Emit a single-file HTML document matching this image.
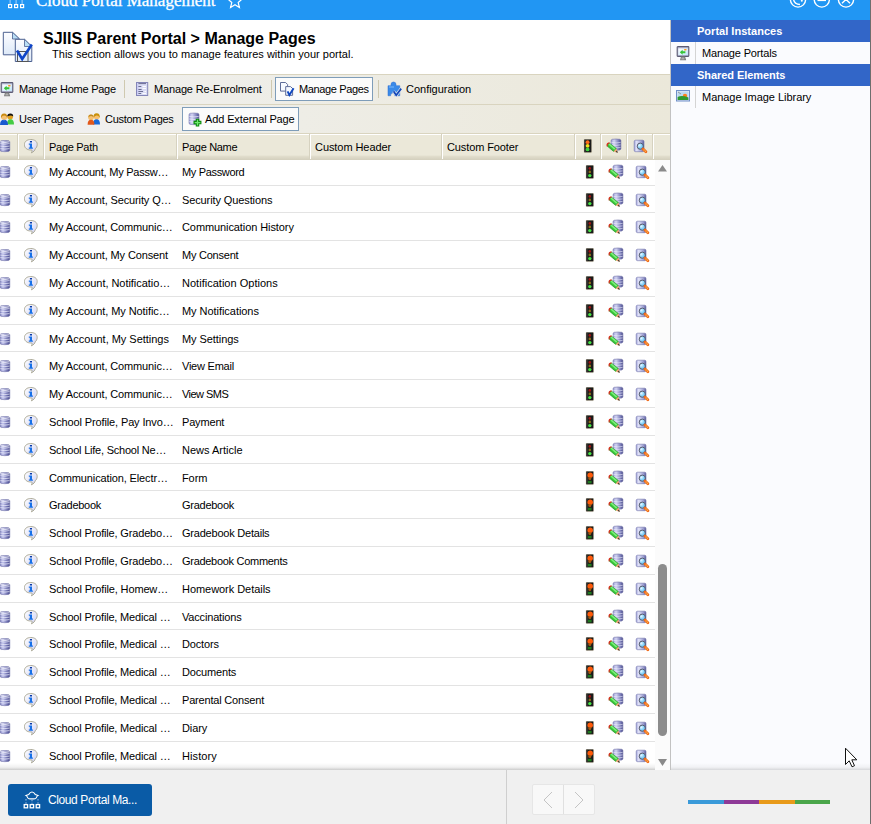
<!DOCTYPE html><html><head><meta charset="utf-8"><style>
*{margin:0;padding:0;box-sizing:border-box}
html,body{width:871px;height:824px;overflow:hidden;background:#fff;font-family:"Liberation Sans",sans-serif;color:#000}
.abs{position:absolute}
.t{position:absolute;white-space:nowrap;font-size:11px;line-height:13px;letter-spacing:-0.2px;color:#000}
svg{display:block}
</style></head><body>

<svg width="0" height="0" style="position:absolute"><defs>
<linearGradient id="dbg" x1="0" x2="1"><stop offset="0" stop-color="#8082bf"/><stop offset=".3" stop-color="#c4c6ee"/><stop offset=".7" stop-color="#7476b4"/><stop offset="1" stop-color="#45478a"/></linearGradient>
<linearGradient id="ifg" x1="0" y1="0" x2="1" y2="1"><stop offset="0" stop-color="#ffffff"/><stop offset="1" stop-color="#cfd0f2"/></linearGradient>
<linearGradient id="edg" x1="0" x2="1"><stop offset="0" stop-color="#9a9cd4"/><stop offset=".3" stop-color="#d4d5f3"/><stop offset=".75" stop-color="#7e80bc"/><stop offset="1" stop-color="#4a4c8a"/></linearGradient>
<linearGradient id="vwg" x1="0" x2="1"><stop offset="0" stop-color="#a4a6dc"/><stop offset=".25" stop-color="#e2e3f8"/><stop offset=".7" stop-color="#a2a4d6"/><stop offset="1" stop-color="#5a5c9c"/></linearGradient>
<radialGradient id="lng" cx=".35" cy=".35" r=".7"><stop offset="0" stop-color="#e8f8ff"/><stop offset=".5" stop-color="#8fd6fb"/><stop offset="1" stop-color="#5ab4e8"/></radialGradient>
<linearGradient id="scr" x1="0" y1="0" x2="1" y2="1"><stop offset="0" stop-color="#ffffff"/><stop offset="1" stop-color="#bfe6fa"/></linearGradient>
<linearGradient id="pg" x1="0" y1="0" x2="0" y2="1"><stop offset="0" stop-color="#fdfdff"/><stop offset="1" stop-color="#dde9f8"/></linearGradient>
</defs></svg>
<div class="abs" style="left:0px;top:0px;width:871px;height:20px;background:#2196f3"></div>
<svg class="abs" style="left:6px;top:0" width="20" height="10" viewBox="0 0 20 10"><g fill="none" stroke="#fff" stroke-width="1.2"><rect x="2.6" y="4.6" width="3" height="3"/><rect x="8.6" y="4.6" width="3" height="3"/><rect x="14.6" y="4.6" width="3" height="3"/></g><g stroke="#a9d4fa" stroke-width="1"><path d="M4.1 0 V4 M10.1 0 V4 M16.1 0 V4"/></g></svg>
<div class="t" style="left:36px;top:-8px;font-family:'Liberation Serif',serif;font-size:17px;line-height:17px;color:#fff;letter-spacing:0;-webkit-text-stroke:0.3px #fff">Cloud Portal Management</div>
<svg class="abs" style="left:226px;top:0" width="18" height="10" viewBox="0 0 18 10"><path d="M9 -6 L11 -1.2 L16 -0.8 L12.2 2.5 L13.4 7.5 L9 4.8 L4.6 7.5 L5.8 2.5 L2 -0.8 L7 -1.2Z" fill="none" stroke="#fff" stroke-width="1.2"/></svg>
<svg class="abs" style="left:780px;top:0" width="80" height="12" viewBox="0 0 80 12"><g fill="none" stroke="#fff" stroke-width="1.4"><circle cx="18" cy="-0.5" r="7.6"/><circle cx="41.8" cy="-0.5" r="7.6"/><circle cx="66" cy="-0.5" r="7.6"/><path d="M13.5 -1 Q14 4 20 4.5" /><path d="M37.5 0.4 H46"/><path d="M62 3.2 L66 -0.6 L70 3.2"/></g><circle cx="21.8" cy="0.8" r="1" fill="#fff"/></svg>
<div class="abs" style="left:870px;top:0px;width:1px;height:824px;background:#6e6e6e"></div>
<svg class="abs" style="left:2px;top:31px" width="33" height="32" viewBox="0 0 33 32"><path d="M1.3 1.3 H10.5 L17.5 8 V23.8 H1.3Z" fill="url(#pg)" stroke="#4a5f8f" stroke-width="1"/><path d="M10.5 1.3 V8 H17.5Z" fill="#b9def5" stroke="#4a5f8f" stroke-width=".8"/><path d="M13.3 8.3 H22.5 L29.8 15.5 V30.5 H13.3Z" fill="url(#pg)" stroke="#4a5f8f" stroke-width="1"/><path d="M22.5 8.3 V15.5 H29.8Z" fill="#b9def5" stroke="#4a5f8f" stroke-width=".8"/><rect x="15.5" y="20.5" width="10.5" height="10" fill="none" stroke="#555" stroke-width="1"/><path d="M15 19.5 L20.2 28 L29.8 13.5" fill="none" stroke="#0f45c8" stroke-width="2.6"/></svg>
<div class="t" style="left:43px;top:29px;font-size:16px;line-height:20px;font-weight:bold;color:#000;letter-spacing:0">SJIIS Parent Portal &gt; Manage Pages</div>
<div class="t" style="left:52px;top:48px;letter-spacing:0.021px;color:#000">This section allows you to manage features within your portal.</div>
<div class="abs" style="left:670px;top:20px;width:1px;height:750px;background:#c2c2c2"></div>
<div class="abs" style="left:671px;top:20px;width:199px;height:750px;background:#fafbfe"></div>
<div class="abs" style="left:671px;top:20px;width:199px;height:22px;background:#3266c8"></div>
<div class="abs" style="left:671px;top:64px;width:199px;height:22px;background:#3266c8"></div>
<div class="t" style="left:697px;top:25px;letter-spacing:0.02px;color:#fff;font-weight:bold">Portal Instances</div>
<div class="t" style="left:697px;top:69px;letter-spacing:-0.057px;color:#fff;font-weight:bold">Shared Elements</div>
<div class="abs" style="left:695px;top:42px;width:1px;height:22px;background:#d4d4d4"></div>
<div class="abs" style="left:695px;top:86px;width:1px;height:22px;background:#d4d4d4"></div>
<div class="t" style="left:702px;top:47px;letter-spacing:-0.162px;color:#000">Manage Portals</div>
<div class="t" style="left:702px;top:91px;letter-spacing:-0.037px;color:#000">Manage Image Library</div>
<div class="abs" style="left:676px;top:46px"><svg width="14" height="15" viewBox="0 0 14 15"><rect x="1.2" y="0.6" width="11.6" height="9.8" rx=".6" fill="#b8bdd8" stroke="#5c5c74" stroke-width="1.1"/><rect x="2.3" y="2.4" width="9.6" height="6.6" fill="url(#scr)"/><path d="M3.8 6.3 L6.6 3.8 V5.2 H9.4 V7.3 H6.6 V8.8Z" fill="#36c436"/><rect x="8" y="3" width="2.6" height="1.5" rx=".7" fill="#ff9a20"/><path d="M5 10.6 L4 14.2 H10.2 L9 10.6Z" fill="#7a7a7a"/><path d="M5.6 11.6 L5.2 13.4 H8.6 L8.2 11.6Z" fill="#b0b0b0"/></svg></div>
<div class="abs" style="left:676px;top:90px"><svg width="14" height="12" viewBox="0 0 14 12"><rect x="0.5" y="0.5" width="13" height="10.5" fill="#dfe8f6" stroke="#6f8fc8" stroke-width="1"/><rect x="1.6" y="1.6" width="10.8" height="8.3" fill="#bcd8f0"/><circle cx="9" cy="6" r="2.2" fill="#ff7f1a"/><path d="M1.6 7 Q6 5 12.4 7.5 V9.9 H1.6Z" fill="#2f9a2f"/><path d="M2 2 L5 4" stroke="#888" stroke-width=".8"/></svg></div>
<div class="abs" style="left:0px;top:74px;width:670px;height:60px;background:linear-gradient(90deg,#f1f1f2 0%,#eeede6 45%,#ebe8da 100%)"></div>
<div class="abs" style="left:0px;top:74px;width:670px;height:1px;background:#d9d4bf"></div>
<div class="abs" style="left:0px;top:104px;width:670px;height:1px;background:#d9d4bf"></div>
<div class="abs" style="left:0px;top:133px;width:670px;height:1px;background:#d9d4bf"></div>
<div class="abs" style="left:0px;top:82px"><svg width="14" height="15" viewBox="0 0 14 15"><rect x="1.2" y="0.6" width="11.6" height="9.8" rx=".6" fill="#b8bdd8" stroke="#5c5c74" stroke-width="1.1"/><rect x="2.3" y="2.4" width="9.6" height="6.6" fill="url(#scr)"/><path d="M3.8 6.3 L6.6 3.8 V5.2 H9.4 V7.3 H6.6 V8.8Z" fill="#36c436"/><rect x="8" y="3" width="2.6" height="1.5" rx=".7" fill="#ff9a20"/><path d="M5 10.6 L4 14.2 H10.2 L9 10.6Z" fill="#7a7a7a"/><path d="M5.6 11.6 L5.2 13.4 H8.6 L8.2 11.6Z" fill="#b0b0b0"/></svg></div>
<div class="t" style="left:19px;top:83px;letter-spacing:-0.253px;">Manage Home Page</div>
<div class="abs" style="left:124px;top:80px;width:1px;height:18px;background:#cfc9b0"></div>
<div class="abs" style="left:136px;top:82px"><svg width="14" height="16" viewBox="0 0 14 16"><rect x="0.5" y="0.5" width="11.2" height="13" fill="#d9dbf4" stroke="#8486b8" stroke-width="1"/><rect x="1.2" y="1.2" width="1.2" height="11.6" fill="#c8caf6"/><path d="M2.4 1.6 H10 M2.4 4.5 H5.3 M2.4 7.5 H5.6 M2.4 9.5 H7 M2.4 11.5 H5.2" stroke="#5f6188" stroke-width=".9"/><path d="M6.5 4.5 H10 M6.5 6.5 H10 M8.5 9.5 H10 M6.5 11.5 H10" stroke="#fff" stroke-width=".9"/></svg></div>
<div class="t" style="left:154px;top:83px;letter-spacing:-0.156px;">Manage Re-Enrolment</div>
<div class="abs" style="left:271px;top:80px;width:1px;height:18px;background:#cfc9b0"></div>
<div class="abs" style="left:275px;top:77px;width:98px;height:24px;background:#fbfbfb;border:1px solid #7f9db9"></div>
<div class="abs" style="left:278px;top:80px"><svg width="18" height="18" viewBox="0 0 18 18"><path d="M2.5 2.5 H7.6 L9.6 4.5 V11.1 H2.5Z" fill="#f6f9ff" stroke="#5e6c98" stroke-width="1"/><path d="M7.7 6.6 H12.6 L14.6 8.6 V15.3 H7.7Z" fill="#f6f9ff" stroke="#5e6c98" stroke-width="1"/><path d="M9.6 11.3 L11.4 15.1 L15.6 8.3" fill="none" stroke="#1148c0" stroke-width="1.9"/></svg></div>
<div class="t" style="left:299px;top:83px;letter-spacing:-0.364px;color:#000">Manage Pages</div>
<div class="abs" style="left:378px;top:80px;width:1px;height:18px;background:#cfc9b0"></div>
<div class="abs" style="left:386px;top:80px"><svg width="18" height="18" viewBox="0 0 18 18"><path d="M5 4.5 Q5 2 7.5 2 Q10 2 10 4.5 V5.7 H13.75 V15.75 H8.6 Q8.6 13 6.6 13 Q4.6 13 4.6 15.75 H2 V5.7 H5Z" fill="#3a8ae8" stroke="#2a6ad0" stroke-width=".5"/><path d="M3 7 H8" stroke="#8cc4ff" stroke-width="1" opacity=".8"/><path d="M7.6 11.2 L10.2 15.2 L15.2 8.6" fill="none" stroke="#f4f4ee" stroke-width="3"/><path d="M7.6 11.2 L10.2 15.2 L15.2 8.6" fill="none" stroke="#1246b8" stroke-width="1.8"/></svg></div>
<div class="t" style="left:406px;top:83px;letter-spacing:-0.017px;">Configuration</div>
<div class="abs" style="left:0px;top:113px"><svg width="15" height="13" viewBox="0 0 15 13"><circle cx="10.2" cy="3.8" r="2.8" fill="#e0a020"/><path d="M7.2 3.6 Q7.2 0.5 10.4 0.5 Q13.3 0.6 13.2 3.4 Q11 1.6 7.2 3.6Z" fill="#111"/><path d="M7 11.6 Q7 6.2 10.5 6.2 Q14 6.2 14 11.6Z" fill="#44cc44"/><circle cx="4.2" cy="4" r="3" fill="#f6c070"/><path d="M1 5.8 Q0.4 0.6 4.2 0.6 Q7.6 0.6 7.3 5.8 Q6.6 2.6 4.2 2.6 Q1.8 2.6 1 5.8Z" fill="#c88a10"/><path d="M0 12 Q0 6.8 4 6.8 Q8 6.8 8 12Z" fill="#1a5ad0"/><path d="M3.6 6.8 L4 8 L4.4 6.8Z" fill="#9ee0ff"/></svg></div>
<div class="t" style="left:19px;top:113px;letter-spacing:-0.289px;">User Pages</div>
<div class="abs" style="left:86px;top:113px"><svg width="15" height="13" viewBox="0 0 15 13"><circle cx="10.6" cy="3.8" r="2.8" fill="#f6c070"/><path d="M7.6 5 Q7 0.3 10.6 0.3 Q14.3 0.3 13.8 5.6 Q13 2.2 10.6 2.4 Q8.4 2.4 7.6 5Z" fill="#c8900a"/><path d="M7 11.6 Q7 6.2 10.5 6.2 Q14 6.2 14 11.6Z" fill="#1a6ad8"/><circle cx="5" cy="4.4" r="2.8" fill="#f6c070"/><path d="M2.4 4.6 Q2.2 1.4 5 1.4 Q7.8 1.4 7.6 4.6 Q6.6 2.8 5 2.9 Q3.2 2.9 2.4 4.6Z" fill="#c08a20"/><path d="M1.6 11.8 Q1.6 6.8 5 6.8 Q8.4 6.8 8.4 11.8Z" fill="#e2581a"/></svg></div>
<div class="t" style="left:105px;top:113px;letter-spacing:-0.309px;">Custom Pages</div>
<div class="abs" style="left:182px;top:107px;width:117px;height:24px;background:#fbfbfb;border:1px solid #7f9db9"></div>
<div class="abs" style="left:188px;top:112px"><svg width="18" height="18" viewBox="0 0 18 18"><path d="M1 2.2 Q1 1 6 1 Q11 1 11 2.2 V11.5 Q11 12.7 6 12.7 Q1 12.7 1 11.5Z" fill="url(#edg)" stroke="#7a7cae" stroke-width=".6"/><path d="M1.3 4.4 Q6 5.4 10.7 4.4 M1.3 7 Q6 8 10.7 7 M1.3 9.6 Q6 10.6 10.7 9.6" stroke="#eeeffc" stroke-width=".7" fill="none"/><path d="M8.3 7.2 H10.7 V9.4 H12.9 V11.8 H10.7 V14 H8.3 V11.8 H6.1 V9.4 H8.3Z" fill="#6ee86e" stroke="#0a8a0a" stroke-width="1.1"/></svg></div>
<div class="t" style="left:205px;top:113px;letter-spacing:-0.125px;color:#000">Add External Page</div>
<div class="abs" style="left:0px;top:134px;width:670px;height:1px;background:#fff"></div>
<div class="abs" style="left:0px;top:135px;width:670px;height:25px;background:linear-gradient(180deg,#ebe8d9 0%,#ebe8d9 80%,#e0dccb 86%,#d3cfbd 100%)"></div>
<div class="abs" style="left:17px;top:134px;width:1px;height:25px;background:#d6d2c0"></div>
<div class="abs" style="left:18px;top:134px;width:1px;height:25px;background:#fff"></div>
<div class="abs" style="left:43px;top:134px;width:1px;height:25px;background:#d6d2c0"></div>
<div class="abs" style="left:44px;top:134px;width:1px;height:25px;background:#fff"></div>
<div class="abs" style="left:176px;top:134px;width:1px;height:25px;background:#d6d2c0"></div>
<div class="abs" style="left:177px;top:134px;width:1px;height:25px;background:#fff"></div>
<div class="abs" style="left:309px;top:134px;width:1px;height:25px;background:#d6d2c0"></div>
<div class="abs" style="left:310px;top:134px;width:1px;height:25px;background:#fff"></div>
<div class="abs" style="left:441px;top:134px;width:1px;height:25px;background:#d6d2c0"></div>
<div class="abs" style="left:442px;top:134px;width:1px;height:25px;background:#fff"></div>
<div class="abs" style="left:574px;top:134px;width:1px;height:25px;background:#d6d2c0"></div>
<div class="abs" style="left:575px;top:134px;width:1px;height:25px;background:#fff"></div>
<div class="abs" style="left:600px;top:134px;width:1px;height:25px;background:#d6d2c0"></div>
<div class="abs" style="left:601px;top:134px;width:1px;height:25px;background:#fff"></div>
<div class="abs" style="left:626px;top:134px;width:1px;height:25px;background:#d6d2c0"></div>
<div class="abs" style="left:627px;top:134px;width:1px;height:25px;background:#fff"></div>
<div class="abs" style="left:652px;top:134px;width:1px;height:25px;background:#d6d2c0"></div>
<div class="abs" style="left:653px;top:134px;width:1px;height:25px;background:#fff"></div>
<div class="t" style="left:49px;top:141px;letter-spacing:-0.288px;">Page Path</div>
<div class="t" style="left:182px;top:141px;letter-spacing:-0.312px;">Page Name</div>
<div class="t" style="left:315px;top:141px;letter-spacing:-0.067px;">Custom Header</div>
<div class="t" style="left:447px;top:141px;letter-spacing:-0.117px;">Custom Footer</div>
<div class="abs" style="left:0px;top:140px"><svg width="11" height="13" viewBox="0 0 11 13"><path d="M0 1.6 Q0 0.4 4.9 0.4 Q9.8 0.4 9.8 1.6 V10.4 Q9.8 11.7 4.9 11.7 Q0 11.7 0 10.4Z" fill="url(#dbg)" stroke="#7a7cae" stroke-width=".6"/><path d="M0.3 3.6 Q4.9 4.6 9.5 3.6 M0.3 6.1 Q4.9 7.1 9.5 6.1 M0.3 8.6 Q4.9 9.6 9.5 8.6" stroke="#eeeffc" stroke-width=".8" fill="none" opacity=".9"/><path d="M0.3 1.8 Q4.9 2.8 9.5 1.8" stroke="#fff" stroke-width=".9" fill="none"/></svg></div>
<div class="abs" style="left:24px;top:139px"><svg width="15" height="15" viewBox="0 0 15 15"><path d="M6.8 0.5 C10.6 0.5 13.2 2.4 13.2 5.4 C13.2 7.4 12.4 8.7 11.2 9.8 C10.9 11.4 9.6 12.9 7.4 13.8 C8.1 12.6 8.2 11.8 7.9 11 C7.5 11 7.2 11 6.8 11 C3 11 0.4 8.9 0.4 5.7 C0.4 2.6 3 0.5 6.8 0.5Z" fill="url(#ifg)" stroke="#a6a48f" stroke-width=".9"/><rect x="5.9" y="2" width="2.1" height="1.5" fill="#0a3aa8"/><path d="M4.8 4.6 H8 V8.6 H8.9 V9.7 H4.8 V8.6 H5.8 V5.7 H4.8Z" fill="#1670e8"/></svg></div>
<div class="abs" style="left:583px;top:139px"><svg width="10" height="15" viewBox="0 0 10 15"><rect x="1" y="0.2" width="7.6" height="13.4" rx=".8" fill="#1a1a1a" stroke="#cfc39e" stroke-width=".4"/><rect x="1.4" y="0.6" width="1.2" height="12.6" fill="#555" opacity=".6"/><circle cx="4.6" cy="3.2" r="1.9" fill="#ff6a1a"/><circle cx="4.6" cy="6.8" r="1.9" fill="#f4e21a"/><circle cx="4.6" cy="10.4" r="1.9" fill="#40d040"/></svg></div>
<div class="abs" style="left:602px;top:136px"><svg width="24" height="20" viewBox="0 0 24 20"><path d="M9.1 4.2 Q9.1 3 14 3 Q18.9 3 18.9 4.2 V13.1 Q18.9 14.3 14 14.3 Q9.1 14.3 9.1 13.1Z" fill="url(#edg)" stroke="#6f71a6" stroke-width=".6"/><path d="M9.4 6.4 Q14 7.4 18.6 6.4 M9.4 8.9 Q14 9.9 18.6 8.9 M9.4 11.4 Q14 12.4 18.6 11.4" stroke="#eceefc" stroke-width=".7" fill="none" opacity=".85"/><path d="M5.3 10.2 Q4.6 7.3 7.3 7 L14.4 12.5 L11.7 15.5Z" fill="#36c436" stroke="#1f8a1f" stroke-width=".5"/><path d="M6.4 8.6 L7.6 7.6 L13.4 12.6 L12.2 13.8Z" fill="#86f486" opacity=".85"/><path d="M5.3 10.4 Q4.4 7.2 7.5 6.8" fill="none" stroke="#e0281a" stroke-width="1.2"/><path d="M11.7 15.5 L14.4 12.5 L15.9 16.7Z" fill="#f2a870"/><path d="M13.5 16 L15 14.4 L15.9 16.7Z" fill="#303030"/></svg></div>
<div class="abs" style="left:630px;top:136px"><svg width="20" height="20" viewBox="0 0 20 20"><rect x="4.2" y="4.2" width="9.8" height="11.5" rx="1.4" fill="url(#vwg)" stroke="#7072aa" stroke-width=".6"/><circle cx="10.3" cy="10.2" r="3.1" fill="url(#lng)" stroke="#5a5a6a" stroke-width="1"/><path d="M13 12.9 L15.9 15.8" stroke="#f06a1a" stroke-width="2.8" stroke-linecap="round"/><path d="M13.7 13.6 L14.4 14.3 M15.1 15 L15.6 15.5" stroke="#ffe06a" stroke-width="1.1"/></svg></div>
<div class="abs" style="left:0;top:160px;width:655px;height:609px;background:#fff;overflow:hidden">
<div class="abs" style="left:0px;top:25px;width:655px;height:1px;background:#e3e3e3"></div>
<div class="abs" style="left:0px;top:6px"><svg width="11" height="13" viewBox="0 0 11 13"><path d="M0 1.6 Q0 0.4 4.9 0.4 Q9.8 0.4 9.8 1.6 V10.4 Q9.8 11.7 4.9 11.7 Q0 11.7 0 10.4Z" fill="url(#dbg)" stroke="#7a7cae" stroke-width=".6"/><path d="M0.3 3.6 Q4.9 4.6 9.5 3.6 M0.3 6.1 Q4.9 7.1 9.5 6.1 M0.3 8.6 Q4.9 9.6 9.5 8.6" stroke="#eeeffc" stroke-width=".8" fill="none" opacity=".9"/><path d="M0.3 1.8 Q4.9 2.8 9.5 1.8" stroke="#fff" stroke-width=".9" fill="none"/></svg></div>
<div class="abs" style="left:24px;top:5px"><svg width="15" height="15" viewBox="0 0 15 15"><path d="M6.8 0.5 C10.6 0.5 13.2 2.4 13.2 5.4 C13.2 7.4 12.4 8.7 11.2 9.8 C10.9 11.4 9.6 12.9 7.4 13.8 C8.1 12.6 8.2 11.8 7.9 11 C7.5 11 7.2 11 6.8 11 C3 11 0.4 8.9 0.4 5.7 C0.4 2.6 3 0.5 6.8 0.5Z" fill="url(#ifg)" stroke="#a6a48f" stroke-width=".9"/><rect x="5.9" y="2" width="2.1" height="1.5" fill="#0a3aa8"/><path d="M4.8 4.6 H8 V8.6 H8.9 V9.7 H4.8 V8.6 H5.8 V5.7 H4.8Z" fill="#1670e8"/></svg></div>
<div class="t" style="left:49px;top:6px;letter-spacing:-0.23px;">My Account, My Passw…</div>
<div class="t" style="left:182px;top:6px;letter-spacing:-0.34px;">My Password</div>
<div class="abs" style="left:585px;top:5px"><svg width="10" height="15" viewBox="0 0 10 15"><rect x="1" y="0.2" width="7.6" height="13.4" rx=".8" fill="#1a1a1a" stroke="#cfc39e" stroke-width=".4"/><rect x="1.4" y="0.6" width="1.2" height="12.6" fill="#555" opacity=".6"/><circle cx="4.8" cy="3.4" r="1.3" fill="#a01414"/><circle cx="4.8" cy="6.9" r="1.3" fill="#8a6a18"/><circle cx="4.8" cy="10.6" r="1.7" fill="#44e044"/></svg></div>
<div class="abs" style="left:604px;top:2px"><svg width="24" height="20" viewBox="0 0 24 20"><path d="M9.1 4.2 Q9.1 3 14 3 Q18.9 3 18.9 4.2 V13.1 Q18.9 14.3 14 14.3 Q9.1 14.3 9.1 13.1Z" fill="url(#edg)" stroke="#6f71a6" stroke-width=".6"/><path d="M9.4 6.4 Q14 7.4 18.6 6.4 M9.4 8.9 Q14 9.9 18.6 8.9 M9.4 11.4 Q14 12.4 18.6 11.4" stroke="#eceefc" stroke-width=".7" fill="none" opacity=".85"/><path d="M5.3 10.2 Q4.6 7.3 7.3 7 L14.4 12.5 L11.7 15.5Z" fill="#36c436" stroke="#1f8a1f" stroke-width=".5"/><path d="M6.4 8.6 L7.6 7.6 L13.4 12.6 L12.2 13.8Z" fill="#86f486" opacity=".85"/><path d="M5.3 10.4 Q4.4 7.2 7.5 6.8" fill="none" stroke="#e0281a" stroke-width="1.2"/><path d="M11.7 15.5 L14.4 12.5 L15.9 16.7Z" fill="#f2a870"/><path d="M13.5 16 L15 14.4 L15.9 16.7Z" fill="#303030"/></svg></div>
<div class="abs" style="left:632px;top:2px"><svg width="20" height="20" viewBox="0 0 20 20"><rect x="4.2" y="4.2" width="9.8" height="11.5" rx="1.4" fill="url(#vwg)" stroke="#7072aa" stroke-width=".6"/><circle cx="10.3" cy="10.2" r="3.1" fill="url(#lng)" stroke="#5a5a6a" stroke-width="1"/><path d="M13 12.9 L15.9 15.8" stroke="#f06a1a" stroke-width="2.8" stroke-linecap="round"/><path d="M13.7 13.6 L14.4 14.3 M15.1 15 L15.6 15.5" stroke="#ffe06a" stroke-width="1.1"/></svg></div>
<div class="abs" style="left:0px;top:52px;width:655px;height:1px;background:#e3e3e3"></div>
<div class="abs" style="left:0px;top:34px"><svg width="11" height="13" viewBox="0 0 11 13"><path d="M0 1.6 Q0 0.4 4.9 0.4 Q9.8 0.4 9.8 1.6 V10.4 Q9.8 11.7 4.9 11.7 Q0 11.7 0 10.4Z" fill="url(#dbg)" stroke="#7a7cae" stroke-width=".6"/><path d="M0.3 3.6 Q4.9 4.6 9.5 3.6 M0.3 6.1 Q4.9 7.1 9.5 6.1 M0.3 8.6 Q4.9 9.6 9.5 8.6" stroke="#eeeffc" stroke-width=".8" fill="none" opacity=".9"/><path d="M0.3 1.8 Q4.9 2.8 9.5 1.8" stroke="#fff" stroke-width=".9" fill="none"/></svg></div>
<div class="abs" style="left:24px;top:33px"><svg width="15" height="15" viewBox="0 0 15 15"><path d="M6.8 0.5 C10.6 0.5 13.2 2.4 13.2 5.4 C13.2 7.4 12.4 8.7 11.2 9.8 C10.9 11.4 9.6 12.9 7.4 13.8 C8.1 12.6 8.2 11.8 7.9 11 C7.5 11 7.2 11 6.8 11 C3 11 0.4 8.9 0.4 5.7 C0.4 2.6 3 0.5 6.8 0.5Z" fill="url(#ifg)" stroke="#a6a48f" stroke-width=".9"/><rect x="5.9" y="2" width="2.1" height="1.5" fill="#0a3aa8"/><path d="M4.8 4.6 H8 V8.6 H8.9 V9.7 H4.8 V8.6 H5.8 V5.7 H4.8Z" fill="#1670e8"/></svg></div>
<div class="t" style="left:49px;top:34px;letter-spacing:-0.123px;">My Account, Security Q…</div>
<div class="t" style="left:182px;top:34px;letter-spacing:-0.112px;">Security Questions</div>
<div class="abs" style="left:585px;top:33px"><svg width="10" height="15" viewBox="0 0 10 15"><rect x="1" y="0.2" width="7.6" height="13.4" rx=".8" fill="#1a1a1a" stroke="#cfc39e" stroke-width=".4"/><rect x="1.4" y="0.6" width="1.2" height="12.6" fill="#555" opacity=".6"/><circle cx="4.8" cy="3.4" r="1.3" fill="#a01414"/><circle cx="4.8" cy="6.9" r="1.3" fill="#8a6a18"/><circle cx="4.8" cy="10.6" r="1.7" fill="#44e044"/></svg></div>
<div class="abs" style="left:604px;top:30px"><svg width="24" height="20" viewBox="0 0 24 20"><path d="M9.1 4.2 Q9.1 3 14 3 Q18.9 3 18.9 4.2 V13.1 Q18.9 14.3 14 14.3 Q9.1 14.3 9.1 13.1Z" fill="url(#edg)" stroke="#6f71a6" stroke-width=".6"/><path d="M9.4 6.4 Q14 7.4 18.6 6.4 M9.4 8.9 Q14 9.9 18.6 8.9 M9.4 11.4 Q14 12.4 18.6 11.4" stroke="#eceefc" stroke-width=".7" fill="none" opacity=".85"/><path d="M5.3 10.2 Q4.6 7.3 7.3 7 L14.4 12.5 L11.7 15.5Z" fill="#36c436" stroke="#1f8a1f" stroke-width=".5"/><path d="M6.4 8.6 L7.6 7.6 L13.4 12.6 L12.2 13.8Z" fill="#86f486" opacity=".85"/><path d="M5.3 10.4 Q4.4 7.2 7.5 6.8" fill="none" stroke="#e0281a" stroke-width="1.2"/><path d="M11.7 15.5 L14.4 12.5 L15.9 16.7Z" fill="#f2a870"/><path d="M13.5 16 L15 14.4 L15.9 16.7Z" fill="#303030"/></svg></div>
<div class="abs" style="left:632px;top:30px"><svg width="20" height="20" viewBox="0 0 20 20"><rect x="4.2" y="4.2" width="9.8" height="11.5" rx="1.4" fill="url(#vwg)" stroke="#7072aa" stroke-width=".6"/><circle cx="10.3" cy="10.2" r="3.1" fill="url(#lng)" stroke="#5a5a6a" stroke-width="1"/><path d="M13 12.9 L15.9 15.8" stroke="#f06a1a" stroke-width="2.8" stroke-linecap="round"/><path d="M13.7 13.6 L14.4 14.3 M15.1 15 L15.6 15.5" stroke="#ffe06a" stroke-width="1.1"/></svg></div>
<div class="abs" style="left:0px;top:80px;width:655px;height:1px;background:#e3e3e3"></div>
<div class="abs" style="left:0px;top:61px"><svg width="11" height="13" viewBox="0 0 11 13"><path d="M0 1.6 Q0 0.4 4.9 0.4 Q9.8 0.4 9.8 1.6 V10.4 Q9.8 11.7 4.9 11.7 Q0 11.7 0 10.4Z" fill="url(#dbg)" stroke="#7a7cae" stroke-width=".6"/><path d="M0.3 3.6 Q4.9 4.6 9.5 3.6 M0.3 6.1 Q4.9 7.1 9.5 6.1 M0.3 8.6 Q4.9 9.6 9.5 8.6" stroke="#eeeffc" stroke-width=".8" fill="none" opacity=".9"/><path d="M0.3 1.8 Q4.9 2.8 9.5 1.8" stroke="#fff" stroke-width=".9" fill="none"/></svg></div>
<div class="abs" style="left:24px;top:60px"><svg width="15" height="15" viewBox="0 0 15 15"><path d="M6.8 0.5 C10.6 0.5 13.2 2.4 13.2 5.4 C13.2 7.4 12.4 8.7 11.2 9.8 C10.9 11.4 9.6 12.9 7.4 13.8 C8.1 12.6 8.2 11.8 7.9 11 C7.5 11 7.2 11 6.8 11 C3 11 0.4 8.9 0.4 5.7 C0.4 2.6 3 0.5 6.8 0.5Z" fill="url(#ifg)" stroke="#a6a48f" stroke-width=".9"/><rect x="5.9" y="2" width="2.1" height="1.5" fill="#0a3aa8"/><path d="M4.8 4.6 H8 V8.6 H8.9 V9.7 H4.8 V8.6 H5.8 V5.7 H4.8Z" fill="#1670e8"/></svg></div>
<div class="t" style="left:49px;top:61px;letter-spacing:-0.14px;">My Account, Communic…</div>
<div class="t" style="left:182px;top:61px;letter-spacing:-0.09px;">Communication History</div>
<div class="abs" style="left:585px;top:60px"><svg width="10" height="15" viewBox="0 0 10 15"><rect x="1" y="0.2" width="7.6" height="13.4" rx=".8" fill="#1a1a1a" stroke="#cfc39e" stroke-width=".4"/><rect x="1.4" y="0.6" width="1.2" height="12.6" fill="#555" opacity=".6"/><circle cx="4.8" cy="3.4" r="1.3" fill="#a01414"/><circle cx="4.8" cy="6.9" r="1.3" fill="#8a6a18"/><circle cx="4.8" cy="10.6" r="1.7" fill="#44e044"/></svg></div>
<div class="abs" style="left:604px;top:57px"><svg width="24" height="20" viewBox="0 0 24 20"><path d="M9.1 4.2 Q9.1 3 14 3 Q18.9 3 18.9 4.2 V13.1 Q18.9 14.3 14 14.3 Q9.1 14.3 9.1 13.1Z" fill="url(#edg)" stroke="#6f71a6" stroke-width=".6"/><path d="M9.4 6.4 Q14 7.4 18.6 6.4 M9.4 8.9 Q14 9.9 18.6 8.9 M9.4 11.4 Q14 12.4 18.6 11.4" stroke="#eceefc" stroke-width=".7" fill="none" opacity=".85"/><path d="M5.3 10.2 Q4.6 7.3 7.3 7 L14.4 12.5 L11.7 15.5Z" fill="#36c436" stroke="#1f8a1f" stroke-width=".5"/><path d="M6.4 8.6 L7.6 7.6 L13.4 12.6 L12.2 13.8Z" fill="#86f486" opacity=".85"/><path d="M5.3 10.4 Q4.4 7.2 7.5 6.8" fill="none" stroke="#e0281a" stroke-width="1.2"/><path d="M11.7 15.5 L14.4 12.5 L15.9 16.7Z" fill="#f2a870"/><path d="M13.5 16 L15 14.4 L15.9 16.7Z" fill="#303030"/></svg></div>
<div class="abs" style="left:632px;top:57px"><svg width="20" height="20" viewBox="0 0 20 20"><rect x="4.2" y="4.2" width="9.8" height="11.5" rx="1.4" fill="url(#vwg)" stroke="#7072aa" stroke-width=".6"/><circle cx="10.3" cy="10.2" r="3.1" fill="url(#lng)" stroke="#5a5a6a" stroke-width="1"/><path d="M13 12.9 L15.9 15.8" stroke="#f06a1a" stroke-width="2.8" stroke-linecap="round"/><path d="M13.7 13.6 L14.4 14.3 M15.1 15 L15.6 15.5" stroke="#ffe06a" stroke-width="1.1"/></svg></div>
<div class="abs" style="left:0px;top:108px;width:655px;height:1px;background:#e3e3e3"></div>
<div class="abs" style="left:0px;top:89px"><svg width="11" height="13" viewBox="0 0 11 13"><path d="M0 1.6 Q0 0.4 4.9 0.4 Q9.8 0.4 9.8 1.6 V10.4 Q9.8 11.7 4.9 11.7 Q0 11.7 0 10.4Z" fill="url(#dbg)" stroke="#7a7cae" stroke-width=".6"/><path d="M0.3 3.6 Q4.9 4.6 9.5 3.6 M0.3 6.1 Q4.9 7.1 9.5 6.1 M0.3 8.6 Q4.9 9.6 9.5 8.6" stroke="#eeeffc" stroke-width=".8" fill="none" opacity=".9"/><path d="M0.3 1.8 Q4.9 2.8 9.5 1.8" stroke="#fff" stroke-width=".9" fill="none"/></svg></div>
<div class="abs" style="left:24px;top:88px"><svg width="15" height="15" viewBox="0 0 15 15"><path d="M6.8 0.5 C10.6 0.5 13.2 2.4 13.2 5.4 C13.2 7.4 12.4 8.7 11.2 9.8 C10.9 11.4 9.6 12.9 7.4 13.8 C8.1 12.6 8.2 11.8 7.9 11 C7.5 11 7.2 11 6.8 11 C3 11 0.4 8.9 0.4 5.7 C0.4 2.6 3 0.5 6.8 0.5Z" fill="url(#ifg)" stroke="#a6a48f" stroke-width=".9"/><rect x="5.9" y="2" width="2.1" height="1.5" fill="#0a3aa8"/><path d="M4.8 4.6 H8 V8.6 H8.9 V9.7 H4.8 V8.6 H5.8 V5.7 H4.8Z" fill="#1670e8"/></svg></div>
<div class="t" style="left:49px;top:89px;letter-spacing:-0.119px;">My Account, My Consent</div>
<div class="t" style="left:182px;top:89px;letter-spacing:-0.233px;">My Consent</div>
<div class="abs" style="left:585px;top:88px"><svg width="10" height="15" viewBox="0 0 10 15"><rect x="1" y="0.2" width="7.6" height="13.4" rx=".8" fill="#1a1a1a" stroke="#cfc39e" stroke-width=".4"/><rect x="1.4" y="0.6" width="1.2" height="12.6" fill="#555" opacity=".6"/><circle cx="4.8" cy="3.4" r="1.3" fill="#a01414"/><circle cx="4.8" cy="6.9" r="1.3" fill="#8a6a18"/><circle cx="4.8" cy="10.6" r="1.7" fill="#44e044"/></svg></div>
<div class="abs" style="left:604px;top:85px"><svg width="24" height="20" viewBox="0 0 24 20"><path d="M9.1 4.2 Q9.1 3 14 3 Q18.9 3 18.9 4.2 V13.1 Q18.9 14.3 14 14.3 Q9.1 14.3 9.1 13.1Z" fill="url(#edg)" stroke="#6f71a6" stroke-width=".6"/><path d="M9.4 6.4 Q14 7.4 18.6 6.4 M9.4 8.9 Q14 9.9 18.6 8.9 M9.4 11.4 Q14 12.4 18.6 11.4" stroke="#eceefc" stroke-width=".7" fill="none" opacity=".85"/><path d="M5.3 10.2 Q4.6 7.3 7.3 7 L14.4 12.5 L11.7 15.5Z" fill="#36c436" stroke="#1f8a1f" stroke-width=".5"/><path d="M6.4 8.6 L7.6 7.6 L13.4 12.6 L12.2 13.8Z" fill="#86f486" opacity=".85"/><path d="M5.3 10.4 Q4.4 7.2 7.5 6.8" fill="none" stroke="#e0281a" stroke-width="1.2"/><path d="M11.7 15.5 L14.4 12.5 L15.9 16.7Z" fill="#f2a870"/><path d="M13.5 16 L15 14.4 L15.9 16.7Z" fill="#303030"/></svg></div>
<div class="abs" style="left:632px;top:85px"><svg width="20" height="20" viewBox="0 0 20 20"><rect x="4.2" y="4.2" width="9.8" height="11.5" rx="1.4" fill="url(#vwg)" stroke="#7072aa" stroke-width=".6"/><circle cx="10.3" cy="10.2" r="3.1" fill="url(#lng)" stroke="#5a5a6a" stroke-width="1"/><path d="M13 12.9 L15.9 15.8" stroke="#f06a1a" stroke-width="2.8" stroke-linecap="round"/><path d="M13.7 13.6 L14.4 14.3 M15.1 15 L15.6 15.5" stroke="#ffe06a" stroke-width="1.1"/></svg></div>
<div class="abs" style="left:0px;top:136px;width:655px;height:1px;background:#e3e3e3"></div>
<div class="abs" style="left:0px;top:117px"><svg width="11" height="13" viewBox="0 0 11 13"><path d="M0 1.6 Q0 0.4 4.9 0.4 Q9.8 0.4 9.8 1.6 V10.4 Q9.8 11.7 4.9 11.7 Q0 11.7 0 10.4Z" fill="url(#dbg)" stroke="#7a7cae" stroke-width=".6"/><path d="M0.3 3.6 Q4.9 4.6 9.5 3.6 M0.3 6.1 Q4.9 7.1 9.5 6.1 M0.3 8.6 Q4.9 9.6 9.5 8.6" stroke="#eeeffc" stroke-width=".8" fill="none" opacity=".9"/><path d="M0.3 1.8 Q4.9 2.8 9.5 1.8" stroke="#fff" stroke-width=".9" fill="none"/></svg></div>
<div class="abs" style="left:24px;top:116px"><svg width="15" height="15" viewBox="0 0 15 15"><path d="M6.8 0.5 C10.6 0.5 13.2 2.4 13.2 5.4 C13.2 7.4 12.4 8.7 11.2 9.8 C10.9 11.4 9.6 12.9 7.4 13.8 C8.1 12.6 8.2 11.8 7.9 11 C7.5 11 7.2 11 6.8 11 C3 11 0.4 8.9 0.4 5.7 C0.4 2.6 3 0.5 6.8 0.5Z" fill="url(#ifg)" stroke="#a6a48f" stroke-width=".9"/><rect x="5.9" y="2" width="2.1" height="1.5" fill="#0a3aa8"/><path d="M4.8 4.6 H8 V8.6 H8.9 V9.7 H4.8 V8.6 H5.8 V5.7 H4.8Z" fill="#1670e8"/></svg></div>
<div class="t" style="left:49px;top:117px;letter-spacing:-0.043px;">My Account, Notificatio…</div>
<div class="t" style="left:182px;top:117px;letter-spacing:0.016px;">Notification Options</div>
<div class="abs" style="left:585px;top:116px"><svg width="10" height="15" viewBox="0 0 10 15"><rect x="1" y="0.2" width="7.6" height="13.4" rx=".8" fill="#1a1a1a" stroke="#cfc39e" stroke-width=".4"/><rect x="1.4" y="0.6" width="1.2" height="12.6" fill="#555" opacity=".6"/><circle cx="4.8" cy="3.4" r="1.3" fill="#a01414"/><circle cx="4.8" cy="6.9" r="1.3" fill="#8a6a18"/><circle cx="4.8" cy="10.6" r="1.7" fill="#44e044"/></svg></div>
<div class="abs" style="left:604px;top:113px"><svg width="24" height="20" viewBox="0 0 24 20"><path d="M9.1 4.2 Q9.1 3 14 3 Q18.9 3 18.9 4.2 V13.1 Q18.9 14.3 14 14.3 Q9.1 14.3 9.1 13.1Z" fill="url(#edg)" stroke="#6f71a6" stroke-width=".6"/><path d="M9.4 6.4 Q14 7.4 18.6 6.4 M9.4 8.9 Q14 9.9 18.6 8.9 M9.4 11.4 Q14 12.4 18.6 11.4" stroke="#eceefc" stroke-width=".7" fill="none" opacity=".85"/><path d="M5.3 10.2 Q4.6 7.3 7.3 7 L14.4 12.5 L11.7 15.5Z" fill="#36c436" stroke="#1f8a1f" stroke-width=".5"/><path d="M6.4 8.6 L7.6 7.6 L13.4 12.6 L12.2 13.8Z" fill="#86f486" opacity=".85"/><path d="M5.3 10.4 Q4.4 7.2 7.5 6.8" fill="none" stroke="#e0281a" stroke-width="1.2"/><path d="M11.7 15.5 L14.4 12.5 L15.9 16.7Z" fill="#f2a870"/><path d="M13.5 16 L15 14.4 L15.9 16.7Z" fill="#303030"/></svg></div>
<div class="abs" style="left:632px;top:113px"><svg width="20" height="20" viewBox="0 0 20 20"><rect x="4.2" y="4.2" width="9.8" height="11.5" rx="1.4" fill="url(#vwg)" stroke="#7072aa" stroke-width=".6"/><circle cx="10.3" cy="10.2" r="3.1" fill="url(#lng)" stroke="#5a5a6a" stroke-width="1"/><path d="M13 12.9 L15.9 15.8" stroke="#f06a1a" stroke-width="2.8" stroke-linecap="round"/><path d="M13.7 13.6 L14.4 14.3 M15.1 15 L15.6 15.5" stroke="#ffe06a" stroke-width="1.1"/></svg></div>
<div class="abs" style="left:0px;top:164px;width:655px;height:1px;background:#e3e3e3"></div>
<div class="abs" style="left:0px;top:145px"><svg width="11" height="13" viewBox="0 0 11 13"><path d="M0 1.6 Q0 0.4 4.9 0.4 Q9.8 0.4 9.8 1.6 V10.4 Q9.8 11.7 4.9 11.7 Q0 11.7 0 10.4Z" fill="url(#dbg)" stroke="#7a7cae" stroke-width=".6"/><path d="M0.3 3.6 Q4.9 4.6 9.5 3.6 M0.3 6.1 Q4.9 7.1 9.5 6.1 M0.3 8.6 Q4.9 9.6 9.5 8.6" stroke="#eeeffc" stroke-width=".8" fill="none" opacity=".9"/><path d="M0.3 1.8 Q4.9 2.8 9.5 1.8" stroke="#fff" stroke-width=".9" fill="none"/></svg></div>
<div class="abs" style="left:24px;top:144px"><svg width="15" height="15" viewBox="0 0 15 15"><path d="M6.8 0.5 C10.6 0.5 13.2 2.4 13.2 5.4 C13.2 7.4 12.4 8.7 11.2 9.8 C10.9 11.4 9.6 12.9 7.4 13.8 C8.1 12.6 8.2 11.8 7.9 11 C7.5 11 7.2 11 6.8 11 C3 11 0.4 8.9 0.4 5.7 C0.4 2.6 3 0.5 6.8 0.5Z" fill="url(#ifg)" stroke="#a6a48f" stroke-width=".9"/><rect x="5.9" y="2" width="2.1" height="1.5" fill="#0a3aa8"/><path d="M4.8 4.6 H8 V8.6 H8.9 V9.7 H4.8 V8.6 H5.8 V5.7 H4.8Z" fill="#1670e8"/></svg></div>
<div class="t" style="left:49px;top:145px;letter-spacing:-0.068px;">My Account, My Notific…</div>
<div class="t" style="left:182px;top:145px;letter-spacing:-0.047px;">My Notifications</div>
<div class="abs" style="left:585px;top:144px"><svg width="10" height="15" viewBox="0 0 10 15"><rect x="1" y="0.2" width="7.6" height="13.4" rx=".8" fill="#1a1a1a" stroke="#cfc39e" stroke-width=".4"/><rect x="1.4" y="0.6" width="1.2" height="12.6" fill="#555" opacity=".6"/><circle cx="4.8" cy="3.4" r="1.3" fill="#a01414"/><circle cx="4.8" cy="6.9" r="1.3" fill="#8a6a18"/><circle cx="4.8" cy="10.6" r="1.7" fill="#44e044"/></svg></div>
<div class="abs" style="left:604px;top:141px"><svg width="24" height="20" viewBox="0 0 24 20"><path d="M9.1 4.2 Q9.1 3 14 3 Q18.9 3 18.9 4.2 V13.1 Q18.9 14.3 14 14.3 Q9.1 14.3 9.1 13.1Z" fill="url(#edg)" stroke="#6f71a6" stroke-width=".6"/><path d="M9.4 6.4 Q14 7.4 18.6 6.4 M9.4 8.9 Q14 9.9 18.6 8.9 M9.4 11.4 Q14 12.4 18.6 11.4" stroke="#eceefc" stroke-width=".7" fill="none" opacity=".85"/><path d="M5.3 10.2 Q4.6 7.3 7.3 7 L14.4 12.5 L11.7 15.5Z" fill="#36c436" stroke="#1f8a1f" stroke-width=".5"/><path d="M6.4 8.6 L7.6 7.6 L13.4 12.6 L12.2 13.8Z" fill="#86f486" opacity=".85"/><path d="M5.3 10.4 Q4.4 7.2 7.5 6.8" fill="none" stroke="#e0281a" stroke-width="1.2"/><path d="M11.7 15.5 L14.4 12.5 L15.9 16.7Z" fill="#f2a870"/><path d="M13.5 16 L15 14.4 L15.9 16.7Z" fill="#303030"/></svg></div>
<div class="abs" style="left:632px;top:141px"><svg width="20" height="20" viewBox="0 0 20 20"><rect x="4.2" y="4.2" width="9.8" height="11.5" rx="1.4" fill="url(#vwg)" stroke="#7072aa" stroke-width=".6"/><circle cx="10.3" cy="10.2" r="3.1" fill="url(#lng)" stroke="#5a5a6a" stroke-width="1"/><path d="M13 12.9 L15.9 15.8" stroke="#f06a1a" stroke-width="2.8" stroke-linecap="round"/><path d="M13.7 13.6 L14.4 14.3 M15.1 15 L15.6 15.5" stroke="#ffe06a" stroke-width="1.1"/></svg></div>
<div class="abs" style="left:0px;top:191px;width:655px;height:1px;background:#e3e3e3"></div>
<div class="abs" style="left:0px;top:173px"><svg width="11" height="13" viewBox="0 0 11 13"><path d="M0 1.6 Q0 0.4 4.9 0.4 Q9.8 0.4 9.8 1.6 V10.4 Q9.8 11.7 4.9 11.7 Q0 11.7 0 10.4Z" fill="url(#dbg)" stroke="#7a7cae" stroke-width=".6"/><path d="M0.3 3.6 Q4.9 4.6 9.5 3.6 M0.3 6.1 Q4.9 7.1 9.5 6.1 M0.3 8.6 Q4.9 9.6 9.5 8.6" stroke="#eeeffc" stroke-width=".8" fill="none" opacity=".9"/><path d="M0.3 1.8 Q4.9 2.8 9.5 1.8" stroke="#fff" stroke-width=".9" fill="none"/></svg></div>
<div class="abs" style="left:24px;top:172px"><svg width="15" height="15" viewBox="0 0 15 15"><path d="M6.8 0.5 C10.6 0.5 13.2 2.4 13.2 5.4 C13.2 7.4 12.4 8.7 11.2 9.8 C10.9 11.4 9.6 12.9 7.4 13.8 C8.1 12.6 8.2 11.8 7.9 11 C7.5 11 7.2 11 6.8 11 C3 11 0.4 8.9 0.4 5.7 C0.4 2.6 3 0.5 6.8 0.5Z" fill="url(#ifg)" stroke="#a6a48f" stroke-width=".9"/><rect x="5.9" y="2" width="2.1" height="1.5" fill="#0a3aa8"/><path d="M4.8 4.6 H8 V8.6 H8.9 V9.7 H4.8 V8.6 H5.8 V5.7 H4.8Z" fill="#1670e8"/></svg></div>
<div class="t" style="left:49px;top:173px;letter-spacing:-0.023px;">My Account, My Settings</div>
<div class="t" style="left:182px;top:173px;letter-spacing:-0.07px;">My Settings</div>
<div class="abs" style="left:585px;top:172px"><svg width="10" height="15" viewBox="0 0 10 15"><rect x="1" y="0.2" width="7.6" height="13.4" rx=".8" fill="#1a1a1a" stroke="#cfc39e" stroke-width=".4"/><rect x="1.4" y="0.6" width="1.2" height="12.6" fill="#555" opacity=".6"/><circle cx="4.8" cy="3.4" r="1.3" fill="#a01414"/><circle cx="4.8" cy="6.9" r="1.3" fill="#8a6a18"/><circle cx="4.8" cy="10.6" r="1.7" fill="#44e044"/></svg></div>
<div class="abs" style="left:604px;top:169px"><svg width="24" height="20" viewBox="0 0 24 20"><path d="M9.1 4.2 Q9.1 3 14 3 Q18.9 3 18.9 4.2 V13.1 Q18.9 14.3 14 14.3 Q9.1 14.3 9.1 13.1Z" fill="url(#edg)" stroke="#6f71a6" stroke-width=".6"/><path d="M9.4 6.4 Q14 7.4 18.6 6.4 M9.4 8.9 Q14 9.9 18.6 8.9 M9.4 11.4 Q14 12.4 18.6 11.4" stroke="#eceefc" stroke-width=".7" fill="none" opacity=".85"/><path d="M5.3 10.2 Q4.6 7.3 7.3 7 L14.4 12.5 L11.7 15.5Z" fill="#36c436" stroke="#1f8a1f" stroke-width=".5"/><path d="M6.4 8.6 L7.6 7.6 L13.4 12.6 L12.2 13.8Z" fill="#86f486" opacity=".85"/><path d="M5.3 10.4 Q4.4 7.2 7.5 6.8" fill="none" stroke="#e0281a" stroke-width="1.2"/><path d="M11.7 15.5 L14.4 12.5 L15.9 16.7Z" fill="#f2a870"/><path d="M13.5 16 L15 14.4 L15.9 16.7Z" fill="#303030"/></svg></div>
<div class="abs" style="left:632px;top:169px"><svg width="20" height="20" viewBox="0 0 20 20"><rect x="4.2" y="4.2" width="9.8" height="11.5" rx="1.4" fill="url(#vwg)" stroke="#7072aa" stroke-width=".6"/><circle cx="10.3" cy="10.2" r="3.1" fill="url(#lng)" stroke="#5a5a6a" stroke-width="1"/><path d="M13 12.9 L15.9 15.8" stroke="#f06a1a" stroke-width="2.8" stroke-linecap="round"/><path d="M13.7 13.6 L14.4 14.3 M15.1 15 L15.6 15.5" stroke="#ffe06a" stroke-width="1.1"/></svg></div>
<div class="abs" style="left:0px;top:219px;width:655px;height:1px;background:#e3e3e3"></div>
<div class="abs" style="left:0px;top:200px"><svg width="11" height="13" viewBox="0 0 11 13"><path d="M0 1.6 Q0 0.4 4.9 0.4 Q9.8 0.4 9.8 1.6 V10.4 Q9.8 11.7 4.9 11.7 Q0 11.7 0 10.4Z" fill="url(#dbg)" stroke="#7a7cae" stroke-width=".6"/><path d="M0.3 3.6 Q4.9 4.6 9.5 3.6 M0.3 6.1 Q4.9 7.1 9.5 6.1 M0.3 8.6 Q4.9 9.6 9.5 8.6" stroke="#eeeffc" stroke-width=".8" fill="none" opacity=".9"/><path d="M0.3 1.8 Q4.9 2.8 9.5 1.8" stroke="#fff" stroke-width=".9" fill="none"/></svg></div>
<div class="abs" style="left:24px;top:199px"><svg width="15" height="15" viewBox="0 0 15 15"><path d="M6.8 0.5 C10.6 0.5 13.2 2.4 13.2 5.4 C13.2 7.4 12.4 8.7 11.2 9.8 C10.9 11.4 9.6 12.9 7.4 13.8 C8.1 12.6 8.2 11.8 7.9 11 C7.5 11 7.2 11 6.8 11 C3 11 0.4 8.9 0.4 5.7 C0.4 2.6 3 0.5 6.8 0.5Z" fill="url(#ifg)" stroke="#a6a48f" stroke-width=".9"/><rect x="5.9" y="2" width="2.1" height="1.5" fill="#0a3aa8"/><path d="M4.8 4.6 H8 V8.6 H8.9 V9.7 H4.8 V8.6 H5.8 V5.7 H4.8Z" fill="#1670e8"/></svg></div>
<div class="t" style="left:49px;top:200px;letter-spacing:-0.14px;">My Account, Communic…</div>
<div class="t" style="left:182px;top:200px;letter-spacing:-0.233px;">View Email</div>
<div class="abs" style="left:585px;top:199px"><svg width="10" height="15" viewBox="0 0 10 15"><rect x="1" y="0.2" width="7.6" height="13.4" rx=".8" fill="#1a1a1a" stroke="#cfc39e" stroke-width=".4"/><rect x="1.4" y="0.6" width="1.2" height="12.6" fill="#555" opacity=".6"/><circle cx="4.8" cy="3.4" r="1.3" fill="#a01414"/><circle cx="4.8" cy="6.9" r="1.3" fill="#8a6a18"/><circle cx="4.8" cy="10.6" r="1.7" fill="#44e044"/></svg></div>
<div class="abs" style="left:604px;top:196px"><svg width="24" height="20" viewBox="0 0 24 20"><path d="M9.1 4.2 Q9.1 3 14 3 Q18.9 3 18.9 4.2 V13.1 Q18.9 14.3 14 14.3 Q9.1 14.3 9.1 13.1Z" fill="url(#edg)" stroke="#6f71a6" stroke-width=".6"/><path d="M9.4 6.4 Q14 7.4 18.6 6.4 M9.4 8.9 Q14 9.9 18.6 8.9 M9.4 11.4 Q14 12.4 18.6 11.4" stroke="#eceefc" stroke-width=".7" fill="none" opacity=".85"/><path d="M5.3 10.2 Q4.6 7.3 7.3 7 L14.4 12.5 L11.7 15.5Z" fill="#36c436" stroke="#1f8a1f" stroke-width=".5"/><path d="M6.4 8.6 L7.6 7.6 L13.4 12.6 L12.2 13.8Z" fill="#86f486" opacity=".85"/><path d="M5.3 10.4 Q4.4 7.2 7.5 6.8" fill="none" stroke="#e0281a" stroke-width="1.2"/><path d="M11.7 15.5 L14.4 12.5 L15.9 16.7Z" fill="#f2a870"/><path d="M13.5 16 L15 14.4 L15.9 16.7Z" fill="#303030"/></svg></div>
<div class="abs" style="left:632px;top:196px"><svg width="20" height="20" viewBox="0 0 20 20"><rect x="4.2" y="4.2" width="9.8" height="11.5" rx="1.4" fill="url(#vwg)" stroke="#7072aa" stroke-width=".6"/><circle cx="10.3" cy="10.2" r="3.1" fill="url(#lng)" stroke="#5a5a6a" stroke-width="1"/><path d="M13 12.9 L15.9 15.8" stroke="#f06a1a" stroke-width="2.8" stroke-linecap="round"/><path d="M13.7 13.6 L14.4 14.3 M15.1 15 L15.6 15.5" stroke="#ffe06a" stroke-width="1.1"/></svg></div>
<div class="abs" style="left:0px;top:247px;width:655px;height:1px;background:#e3e3e3"></div>
<div class="abs" style="left:0px;top:228px"><svg width="11" height="13" viewBox="0 0 11 13"><path d="M0 1.6 Q0 0.4 4.9 0.4 Q9.8 0.4 9.8 1.6 V10.4 Q9.8 11.7 4.9 11.7 Q0 11.7 0 10.4Z" fill="url(#dbg)" stroke="#7a7cae" stroke-width=".6"/><path d="M0.3 3.6 Q4.9 4.6 9.5 3.6 M0.3 6.1 Q4.9 7.1 9.5 6.1 M0.3 8.6 Q4.9 9.6 9.5 8.6" stroke="#eeeffc" stroke-width=".8" fill="none" opacity=".9"/><path d="M0.3 1.8 Q4.9 2.8 9.5 1.8" stroke="#fff" stroke-width=".9" fill="none"/></svg></div>
<div class="abs" style="left:24px;top:227px"><svg width="15" height="15" viewBox="0 0 15 15"><path d="M6.8 0.5 C10.6 0.5 13.2 2.4 13.2 5.4 C13.2 7.4 12.4 8.7 11.2 9.8 C10.9 11.4 9.6 12.9 7.4 13.8 C8.1 12.6 8.2 11.8 7.9 11 C7.5 11 7.2 11 6.8 11 C3 11 0.4 8.9 0.4 5.7 C0.4 2.6 3 0.5 6.8 0.5Z" fill="url(#ifg)" stroke="#a6a48f" stroke-width=".9"/><rect x="5.9" y="2" width="2.1" height="1.5" fill="#0a3aa8"/><path d="M4.8 4.6 H8 V8.6 H8.9 V9.7 H4.8 V8.6 H5.8 V5.7 H4.8Z" fill="#1670e8"/></svg></div>
<div class="t" style="left:49px;top:228px;letter-spacing:-0.14px;">My Account, Communic…</div>
<div class="t" style="left:182px;top:228px;letter-spacing:-0.543px;">View SMS</div>
<div class="abs" style="left:585px;top:227px"><svg width="10" height="15" viewBox="0 0 10 15"><rect x="1" y="0.2" width="7.6" height="13.4" rx=".8" fill="#1a1a1a" stroke="#cfc39e" stroke-width=".4"/><rect x="1.4" y="0.6" width="1.2" height="12.6" fill="#555" opacity=".6"/><circle cx="4.8" cy="3.4" r="1.3" fill="#a01414"/><circle cx="4.8" cy="6.9" r="1.3" fill="#8a6a18"/><circle cx="4.8" cy="10.6" r="1.7" fill="#44e044"/></svg></div>
<div class="abs" style="left:604px;top:224px"><svg width="24" height="20" viewBox="0 0 24 20"><path d="M9.1 4.2 Q9.1 3 14 3 Q18.9 3 18.9 4.2 V13.1 Q18.9 14.3 14 14.3 Q9.1 14.3 9.1 13.1Z" fill="url(#edg)" stroke="#6f71a6" stroke-width=".6"/><path d="M9.4 6.4 Q14 7.4 18.6 6.4 M9.4 8.9 Q14 9.9 18.6 8.9 M9.4 11.4 Q14 12.4 18.6 11.4" stroke="#eceefc" stroke-width=".7" fill="none" opacity=".85"/><path d="M5.3 10.2 Q4.6 7.3 7.3 7 L14.4 12.5 L11.7 15.5Z" fill="#36c436" stroke="#1f8a1f" stroke-width=".5"/><path d="M6.4 8.6 L7.6 7.6 L13.4 12.6 L12.2 13.8Z" fill="#86f486" opacity=".85"/><path d="M5.3 10.4 Q4.4 7.2 7.5 6.8" fill="none" stroke="#e0281a" stroke-width="1.2"/><path d="M11.7 15.5 L14.4 12.5 L15.9 16.7Z" fill="#f2a870"/><path d="M13.5 16 L15 14.4 L15.9 16.7Z" fill="#303030"/></svg></div>
<div class="abs" style="left:632px;top:224px"><svg width="20" height="20" viewBox="0 0 20 20"><rect x="4.2" y="4.2" width="9.8" height="11.5" rx="1.4" fill="url(#vwg)" stroke="#7072aa" stroke-width=".6"/><circle cx="10.3" cy="10.2" r="3.1" fill="url(#lng)" stroke="#5a5a6a" stroke-width="1"/><path d="M13 12.9 L15.9 15.8" stroke="#f06a1a" stroke-width="2.8" stroke-linecap="round"/><path d="M13.7 13.6 L14.4 14.3 M15.1 15 L15.6 15.5" stroke="#ffe06a" stroke-width="1.1"/></svg></div>
<div class="abs" style="left:0px;top:275px;width:655px;height:1px;background:#e3e3e3"></div>
<div class="abs" style="left:0px;top:256px"><svg width="11" height="13" viewBox="0 0 11 13"><path d="M0 1.6 Q0 0.4 4.9 0.4 Q9.8 0.4 9.8 1.6 V10.4 Q9.8 11.7 4.9 11.7 Q0 11.7 0 10.4Z" fill="url(#dbg)" stroke="#7a7cae" stroke-width=".6"/><path d="M0.3 3.6 Q4.9 4.6 9.5 3.6 M0.3 6.1 Q4.9 7.1 9.5 6.1 M0.3 8.6 Q4.9 9.6 9.5 8.6" stroke="#eeeffc" stroke-width=".8" fill="none" opacity=".9"/><path d="M0.3 1.8 Q4.9 2.8 9.5 1.8" stroke="#fff" stroke-width=".9" fill="none"/></svg></div>
<div class="abs" style="left:24px;top:255px"><svg width="15" height="15" viewBox="0 0 15 15"><path d="M6.8 0.5 C10.6 0.5 13.2 2.4 13.2 5.4 C13.2 7.4 12.4 8.7 11.2 9.8 C10.9 11.4 9.6 12.9 7.4 13.8 C8.1 12.6 8.2 11.8 7.9 11 C7.5 11 7.2 11 6.8 11 C3 11 0.4 8.9 0.4 5.7 C0.4 2.6 3 0.5 6.8 0.5Z" fill="url(#ifg)" stroke="#a6a48f" stroke-width=".9"/><rect x="5.9" y="2" width="2.1" height="1.5" fill="#0a3aa8"/><path d="M4.8 4.6 H8 V8.6 H8.9 V9.7 H4.8 V8.6 H5.8 V5.7 H4.8Z" fill="#1670e8"/></svg></div>
<div class="t" style="left:49px;top:256px;letter-spacing:-0.129px;">School Profile, Pay Invo…</div>
<div class="t" style="left:182px;top:256px;letter-spacing:-0.167px;">Payment</div>
<div class="abs" style="left:585px;top:255px"><svg width="10" height="15" viewBox="0 0 10 15"><rect x="1" y="0.2" width="7.6" height="13.4" rx=".8" fill="#1a1a1a" stroke="#cfc39e" stroke-width=".4"/><rect x="1.4" y="0.6" width="1.2" height="12.6" fill="#555" opacity=".6"/><circle cx="4.8" cy="3.4" r="1.3" fill="#a01414"/><circle cx="4.8" cy="6.9" r="1.3" fill="#8a6a18"/><circle cx="4.8" cy="10.6" r="1.7" fill="#44e044"/></svg></div>
<div class="abs" style="left:604px;top:252px"><svg width="24" height="20" viewBox="0 0 24 20"><path d="M9.1 4.2 Q9.1 3 14 3 Q18.9 3 18.9 4.2 V13.1 Q18.9 14.3 14 14.3 Q9.1 14.3 9.1 13.1Z" fill="url(#edg)" stroke="#6f71a6" stroke-width=".6"/><path d="M9.4 6.4 Q14 7.4 18.6 6.4 M9.4 8.9 Q14 9.9 18.6 8.9 M9.4 11.4 Q14 12.4 18.6 11.4" stroke="#eceefc" stroke-width=".7" fill="none" opacity=".85"/><path d="M5.3 10.2 Q4.6 7.3 7.3 7 L14.4 12.5 L11.7 15.5Z" fill="#36c436" stroke="#1f8a1f" stroke-width=".5"/><path d="M6.4 8.6 L7.6 7.6 L13.4 12.6 L12.2 13.8Z" fill="#86f486" opacity=".85"/><path d="M5.3 10.4 Q4.4 7.2 7.5 6.8" fill="none" stroke="#e0281a" stroke-width="1.2"/><path d="M11.7 15.5 L14.4 12.5 L15.9 16.7Z" fill="#f2a870"/><path d="M13.5 16 L15 14.4 L15.9 16.7Z" fill="#303030"/></svg></div>
<div class="abs" style="left:632px;top:252px"><svg width="20" height="20" viewBox="0 0 20 20"><rect x="4.2" y="4.2" width="9.8" height="11.5" rx="1.4" fill="url(#vwg)" stroke="#7072aa" stroke-width=".6"/><circle cx="10.3" cy="10.2" r="3.1" fill="url(#lng)" stroke="#5a5a6a" stroke-width="1"/><path d="M13 12.9 L15.9 15.8" stroke="#f06a1a" stroke-width="2.8" stroke-linecap="round"/><path d="M13.7 13.6 L14.4 14.3 M15.1 15 L15.6 15.5" stroke="#ffe06a" stroke-width="1.1"/></svg></div>
<div class="abs" style="left:0px;top:303px;width:655px;height:1px;background:#e3e3e3"></div>
<div class="abs" style="left:0px;top:284px"><svg width="11" height="13" viewBox="0 0 11 13"><path d="M0 1.6 Q0 0.4 4.9 0.4 Q9.8 0.4 9.8 1.6 V10.4 Q9.8 11.7 4.9 11.7 Q0 11.7 0 10.4Z" fill="url(#dbg)" stroke="#7a7cae" stroke-width=".6"/><path d="M0.3 3.6 Q4.9 4.6 9.5 3.6 M0.3 6.1 Q4.9 7.1 9.5 6.1 M0.3 8.6 Q4.9 9.6 9.5 8.6" stroke="#eeeffc" stroke-width=".8" fill="none" opacity=".9"/><path d="M0.3 1.8 Q4.9 2.8 9.5 1.8" stroke="#fff" stroke-width=".9" fill="none"/></svg></div>
<div class="abs" style="left:24px;top:283px"><svg width="15" height="15" viewBox="0 0 15 15"><path d="M6.8 0.5 C10.6 0.5 13.2 2.4 13.2 5.4 C13.2 7.4 12.4 8.7 11.2 9.8 C10.9 11.4 9.6 12.9 7.4 13.8 C8.1 12.6 8.2 11.8 7.9 11 C7.5 11 7.2 11 6.8 11 C3 11 0.4 8.9 0.4 5.7 C0.4 2.6 3 0.5 6.8 0.5Z" fill="url(#ifg)" stroke="#a6a48f" stroke-width=".9"/><rect x="5.9" y="2" width="2.1" height="1.5" fill="#0a3aa8"/><path d="M4.8 4.6 H8 V8.6 H8.9 V9.7 H4.8 V8.6 H5.8 V5.7 H4.8Z" fill="#1670e8"/></svg></div>
<div class="t" style="left:49px;top:284px;letter-spacing:-0.223px;">School Life, School Ne…</div>
<div class="t" style="left:182px;top:284px;letter-spacing:0.009px;">News Article</div>
<div class="abs" style="left:585px;top:283px"><svg width="10" height="15" viewBox="0 0 10 15"><rect x="1" y="0.2" width="7.6" height="13.4" rx=".8" fill="#1a1a1a" stroke="#cfc39e" stroke-width=".4"/><rect x="1.4" y="0.6" width="1.2" height="12.6" fill="#555" opacity=".6"/><circle cx="4.8" cy="3.4" r="1.3" fill="#a01414"/><circle cx="4.8" cy="6.9" r="1.3" fill="#8a6a18"/><circle cx="4.8" cy="10.6" r="1.7" fill="#44e044"/></svg></div>
<div class="abs" style="left:604px;top:280px"><svg width="24" height="20" viewBox="0 0 24 20"><path d="M9.1 4.2 Q9.1 3 14 3 Q18.9 3 18.9 4.2 V13.1 Q18.9 14.3 14 14.3 Q9.1 14.3 9.1 13.1Z" fill="url(#edg)" stroke="#6f71a6" stroke-width=".6"/><path d="M9.4 6.4 Q14 7.4 18.6 6.4 M9.4 8.9 Q14 9.9 18.6 8.9 M9.4 11.4 Q14 12.4 18.6 11.4" stroke="#eceefc" stroke-width=".7" fill="none" opacity=".85"/><path d="M5.3 10.2 Q4.6 7.3 7.3 7 L14.4 12.5 L11.7 15.5Z" fill="#36c436" stroke="#1f8a1f" stroke-width=".5"/><path d="M6.4 8.6 L7.6 7.6 L13.4 12.6 L12.2 13.8Z" fill="#86f486" opacity=".85"/><path d="M5.3 10.4 Q4.4 7.2 7.5 6.8" fill="none" stroke="#e0281a" stroke-width="1.2"/><path d="M11.7 15.5 L14.4 12.5 L15.9 16.7Z" fill="#f2a870"/><path d="M13.5 16 L15 14.4 L15.9 16.7Z" fill="#303030"/></svg></div>
<div class="abs" style="left:632px;top:280px"><svg width="20" height="20" viewBox="0 0 20 20"><rect x="4.2" y="4.2" width="9.8" height="11.5" rx="1.4" fill="url(#vwg)" stroke="#7072aa" stroke-width=".6"/><circle cx="10.3" cy="10.2" r="3.1" fill="url(#lng)" stroke="#5a5a6a" stroke-width="1"/><path d="M13 12.9 L15.9 15.8" stroke="#f06a1a" stroke-width="2.8" stroke-linecap="round"/><path d="M13.7 13.6 L14.4 14.3 M15.1 15 L15.6 15.5" stroke="#ffe06a" stroke-width="1.1"/></svg></div>
<div class="abs" style="left:0px;top:330px;width:655px;height:1px;background:#e3e3e3"></div>
<div class="abs" style="left:0px;top:312px"><svg width="11" height="13" viewBox="0 0 11 13"><path d="M0 1.6 Q0 0.4 4.9 0.4 Q9.8 0.4 9.8 1.6 V10.4 Q9.8 11.7 4.9 11.7 Q0 11.7 0 10.4Z" fill="url(#dbg)" stroke="#7a7cae" stroke-width=".6"/><path d="M0.3 3.6 Q4.9 4.6 9.5 3.6 M0.3 6.1 Q4.9 7.1 9.5 6.1 M0.3 8.6 Q4.9 9.6 9.5 8.6" stroke="#eeeffc" stroke-width=".8" fill="none" opacity=".9"/><path d="M0.3 1.8 Q4.9 2.8 9.5 1.8" stroke="#fff" stroke-width=".9" fill="none"/></svg></div>
<div class="abs" style="left:24px;top:311px"><svg width="15" height="15" viewBox="0 0 15 15"><path d="M6.8 0.5 C10.6 0.5 13.2 2.4 13.2 5.4 C13.2 7.4 12.4 8.7 11.2 9.8 C10.9 11.4 9.6 12.9 7.4 13.8 C8.1 12.6 8.2 11.8 7.9 11 C7.5 11 7.2 11 6.8 11 C3 11 0.4 8.9 0.4 5.7 C0.4 2.6 3 0.5 6.8 0.5Z" fill="url(#ifg)" stroke="#a6a48f" stroke-width=".9"/><rect x="5.9" y="2" width="2.1" height="1.5" fill="#0a3aa8"/><path d="M4.8 4.6 H8 V8.6 H8.9 V9.7 H4.8 V8.6 H5.8 V5.7 H4.8Z" fill="#1670e8"/></svg></div>
<div class="t" style="left:49px;top:312px;letter-spacing:-0.129px;">Communication, Electr…</div>
<div class="t" style="left:182px;top:312px;letter-spacing:-0.1px;">Form</div>
<div class="abs" style="left:585px;top:311px"><svg width="10" height="15" viewBox="0 0 10 15"><rect x="1" y="0.2" width="7.6" height="13.4" rx=".8" fill="#1a1a1a" stroke="#cfc39e" stroke-width=".4"/><rect x="1.4" y="0.6" width="1.2" height="12.6" fill="#555" opacity=".6"/><circle cx="5.2" cy="4.3" r="2.7" fill="#ff5a0a"/><circle cx="4.8" cy="7.6" r="1.5" fill="#a05a12"/><rect x="2.8" y="9.8" width="3.8" height="2.6" fill="#1f7a1f"/></svg></div>
<div class="abs" style="left:604px;top:308px"><svg width="24" height="20" viewBox="0 0 24 20"><path d="M9.1 4.2 Q9.1 3 14 3 Q18.9 3 18.9 4.2 V13.1 Q18.9 14.3 14 14.3 Q9.1 14.3 9.1 13.1Z" fill="url(#edg)" stroke="#6f71a6" stroke-width=".6"/><path d="M9.4 6.4 Q14 7.4 18.6 6.4 M9.4 8.9 Q14 9.9 18.6 8.9 M9.4 11.4 Q14 12.4 18.6 11.4" stroke="#eceefc" stroke-width=".7" fill="none" opacity=".85"/><path d="M5.3 10.2 Q4.6 7.3 7.3 7 L14.4 12.5 L11.7 15.5Z" fill="#36c436" stroke="#1f8a1f" stroke-width=".5"/><path d="M6.4 8.6 L7.6 7.6 L13.4 12.6 L12.2 13.8Z" fill="#86f486" opacity=".85"/><path d="M5.3 10.4 Q4.4 7.2 7.5 6.8" fill="none" stroke="#e0281a" stroke-width="1.2"/><path d="M11.7 15.5 L14.4 12.5 L15.9 16.7Z" fill="#f2a870"/><path d="M13.5 16 L15 14.4 L15.9 16.7Z" fill="#303030"/></svg></div>
<div class="abs" style="left:632px;top:308px"><svg width="20" height="20" viewBox="0 0 20 20"><rect x="4.2" y="4.2" width="9.8" height="11.5" rx="1.4" fill="url(#vwg)" stroke="#7072aa" stroke-width=".6"/><circle cx="10.3" cy="10.2" r="3.1" fill="url(#lng)" stroke="#5a5a6a" stroke-width="1"/><path d="M13 12.9 L15.9 15.8" stroke="#f06a1a" stroke-width="2.8" stroke-linecap="round"/><path d="M13.7 13.6 L14.4 14.3 M15.1 15 L15.6 15.5" stroke="#ffe06a" stroke-width="1.1"/></svg></div>
<div class="abs" style="left:0px;top:358px;width:655px;height:1px;background:#e3e3e3"></div>
<div class="abs" style="left:0px;top:339px"><svg width="11" height="13" viewBox="0 0 11 13"><path d="M0 1.6 Q0 0.4 4.9 0.4 Q9.8 0.4 9.8 1.6 V10.4 Q9.8 11.7 4.9 11.7 Q0 11.7 0 10.4Z" fill="url(#dbg)" stroke="#7a7cae" stroke-width=".6"/><path d="M0.3 3.6 Q4.9 4.6 9.5 3.6 M0.3 6.1 Q4.9 7.1 9.5 6.1 M0.3 8.6 Q4.9 9.6 9.5 8.6" stroke="#eeeffc" stroke-width=".8" fill="none" opacity=".9"/><path d="M0.3 1.8 Q4.9 2.8 9.5 1.8" stroke="#fff" stroke-width=".9" fill="none"/></svg></div>
<div class="abs" style="left:24px;top:338px"><svg width="15" height="15" viewBox="0 0 15 15"><path d="M6.8 0.5 C10.6 0.5 13.2 2.4 13.2 5.4 C13.2 7.4 12.4 8.7 11.2 9.8 C10.9 11.4 9.6 12.9 7.4 13.8 C8.1 12.6 8.2 11.8 7.9 11 C7.5 11 7.2 11 6.8 11 C3 11 0.4 8.9 0.4 5.7 C0.4 2.6 3 0.5 6.8 0.5Z" fill="url(#ifg)" stroke="#a6a48f" stroke-width=".9"/><rect x="5.9" y="2" width="2.1" height="1.5" fill="#0a3aa8"/><path d="M4.8 4.6 H8 V8.6 H8.9 V9.7 H4.8 V8.6 H5.8 V5.7 H4.8Z" fill="#1670e8"/></svg></div>
<div class="t" style="left:49px;top:339px;letter-spacing:-0.263px;">Gradebook</div>
<div class="t" style="left:182px;top:339px;letter-spacing:-0.263px;">Gradebook</div>
<div class="abs" style="left:585px;top:338px"><svg width="10" height="15" viewBox="0 0 10 15"><rect x="1" y="0.2" width="7.6" height="13.4" rx=".8" fill="#1a1a1a" stroke="#cfc39e" stroke-width=".4"/><rect x="1.4" y="0.6" width="1.2" height="12.6" fill="#555" opacity=".6"/><circle cx="5.2" cy="4.3" r="2.7" fill="#ff5a0a"/><circle cx="4.8" cy="7.6" r="1.5" fill="#a05a12"/><rect x="2.8" y="9.8" width="3.8" height="2.6" fill="#1f7a1f"/></svg></div>
<div class="abs" style="left:604px;top:335px"><svg width="24" height="20" viewBox="0 0 24 20"><path d="M9.1 4.2 Q9.1 3 14 3 Q18.9 3 18.9 4.2 V13.1 Q18.9 14.3 14 14.3 Q9.1 14.3 9.1 13.1Z" fill="url(#edg)" stroke="#6f71a6" stroke-width=".6"/><path d="M9.4 6.4 Q14 7.4 18.6 6.4 M9.4 8.9 Q14 9.9 18.6 8.9 M9.4 11.4 Q14 12.4 18.6 11.4" stroke="#eceefc" stroke-width=".7" fill="none" opacity=".85"/><path d="M5.3 10.2 Q4.6 7.3 7.3 7 L14.4 12.5 L11.7 15.5Z" fill="#36c436" stroke="#1f8a1f" stroke-width=".5"/><path d="M6.4 8.6 L7.6 7.6 L13.4 12.6 L12.2 13.8Z" fill="#86f486" opacity=".85"/><path d="M5.3 10.4 Q4.4 7.2 7.5 6.8" fill="none" stroke="#e0281a" stroke-width="1.2"/><path d="M11.7 15.5 L14.4 12.5 L15.9 16.7Z" fill="#f2a870"/><path d="M13.5 16 L15 14.4 L15.9 16.7Z" fill="#303030"/></svg></div>
<div class="abs" style="left:632px;top:335px"><svg width="20" height="20" viewBox="0 0 20 20"><rect x="4.2" y="4.2" width="9.8" height="11.5" rx="1.4" fill="url(#vwg)" stroke="#7072aa" stroke-width=".6"/><circle cx="10.3" cy="10.2" r="3.1" fill="url(#lng)" stroke="#5a5a6a" stroke-width="1"/><path d="M13 12.9 L15.9 15.8" stroke="#f06a1a" stroke-width="2.8" stroke-linecap="round"/><path d="M13.7 13.6 L14.4 14.3 M15.1 15 L15.6 15.5" stroke="#ffe06a" stroke-width="1.1"/></svg></div>
<div class="abs" style="left:0px;top:386px;width:655px;height:1px;background:#e3e3e3"></div>
<div class="abs" style="left:0px;top:367px"><svg width="11" height="13" viewBox="0 0 11 13"><path d="M0 1.6 Q0 0.4 4.9 0.4 Q9.8 0.4 9.8 1.6 V10.4 Q9.8 11.7 4.9 11.7 Q0 11.7 0 10.4Z" fill="url(#dbg)" stroke="#7a7cae" stroke-width=".6"/><path d="M0.3 3.6 Q4.9 4.6 9.5 3.6 M0.3 6.1 Q4.9 7.1 9.5 6.1 M0.3 8.6 Q4.9 9.6 9.5 8.6" stroke="#eeeffc" stroke-width=".8" fill="none" opacity=".9"/><path d="M0.3 1.8 Q4.9 2.8 9.5 1.8" stroke="#fff" stroke-width=".9" fill="none"/></svg></div>
<div class="abs" style="left:24px;top:366px"><svg width="15" height="15" viewBox="0 0 15 15"><path d="M6.8 0.5 C10.6 0.5 13.2 2.4 13.2 5.4 C13.2 7.4 12.4 8.7 11.2 9.8 C10.9 11.4 9.6 12.9 7.4 13.8 C8.1 12.6 8.2 11.8 7.9 11 C7.5 11 7.2 11 6.8 11 C3 11 0.4 8.9 0.4 5.7 C0.4 2.6 3 0.5 6.8 0.5Z" fill="url(#ifg)" stroke="#a6a48f" stroke-width=".9"/><rect x="5.9" y="2" width="2.1" height="1.5" fill="#0a3aa8"/><path d="M4.8 4.6 H8 V8.6 H8.9 V9.7 H4.8 V8.6 H5.8 V5.7 H4.8Z" fill="#1670e8"/></svg></div>
<div class="t" style="left:49px;top:367px;letter-spacing:-0.165px;">School Profile, Gradebo…</div>
<div class="t" style="left:182px;top:367px;letter-spacing:-0.219px;">Gradebook Details</div>
<div class="abs" style="left:585px;top:366px"><svg width="10" height="15" viewBox="0 0 10 15"><rect x="1" y="0.2" width="7.6" height="13.4" rx=".8" fill="#1a1a1a" stroke="#cfc39e" stroke-width=".4"/><rect x="1.4" y="0.6" width="1.2" height="12.6" fill="#555" opacity=".6"/><circle cx="5.2" cy="4.3" r="2.7" fill="#ff5a0a"/><circle cx="4.8" cy="7.6" r="1.5" fill="#a05a12"/><rect x="2.8" y="9.8" width="3.8" height="2.6" fill="#1f7a1f"/></svg></div>
<div class="abs" style="left:604px;top:363px"><svg width="24" height="20" viewBox="0 0 24 20"><path d="M9.1 4.2 Q9.1 3 14 3 Q18.9 3 18.9 4.2 V13.1 Q18.9 14.3 14 14.3 Q9.1 14.3 9.1 13.1Z" fill="url(#edg)" stroke="#6f71a6" stroke-width=".6"/><path d="M9.4 6.4 Q14 7.4 18.6 6.4 M9.4 8.9 Q14 9.9 18.6 8.9 M9.4 11.4 Q14 12.4 18.6 11.4" stroke="#eceefc" stroke-width=".7" fill="none" opacity=".85"/><path d="M5.3 10.2 Q4.6 7.3 7.3 7 L14.4 12.5 L11.7 15.5Z" fill="#36c436" stroke="#1f8a1f" stroke-width=".5"/><path d="M6.4 8.6 L7.6 7.6 L13.4 12.6 L12.2 13.8Z" fill="#86f486" opacity=".85"/><path d="M5.3 10.4 Q4.4 7.2 7.5 6.8" fill="none" stroke="#e0281a" stroke-width="1.2"/><path d="M11.7 15.5 L14.4 12.5 L15.9 16.7Z" fill="#f2a870"/><path d="M13.5 16 L15 14.4 L15.9 16.7Z" fill="#303030"/></svg></div>
<div class="abs" style="left:632px;top:363px"><svg width="20" height="20" viewBox="0 0 20 20"><rect x="4.2" y="4.2" width="9.8" height="11.5" rx="1.4" fill="url(#vwg)" stroke="#7072aa" stroke-width=".6"/><circle cx="10.3" cy="10.2" r="3.1" fill="url(#lng)" stroke="#5a5a6a" stroke-width="1"/><path d="M13 12.9 L15.9 15.8" stroke="#f06a1a" stroke-width="2.8" stroke-linecap="round"/><path d="M13.7 13.6 L14.4 14.3 M15.1 15 L15.6 15.5" stroke="#ffe06a" stroke-width="1.1"/></svg></div>
<div class="abs" style="left:0px;top:414px;width:655px;height:1px;background:#e3e3e3"></div>
<div class="abs" style="left:0px;top:395px"><svg width="11" height="13" viewBox="0 0 11 13"><path d="M0 1.6 Q0 0.4 4.9 0.4 Q9.8 0.4 9.8 1.6 V10.4 Q9.8 11.7 4.9 11.7 Q0 11.7 0 10.4Z" fill="url(#dbg)" stroke="#7a7cae" stroke-width=".6"/><path d="M0.3 3.6 Q4.9 4.6 9.5 3.6 M0.3 6.1 Q4.9 7.1 9.5 6.1 M0.3 8.6 Q4.9 9.6 9.5 8.6" stroke="#eeeffc" stroke-width=".8" fill="none" opacity=".9"/><path d="M0.3 1.8 Q4.9 2.8 9.5 1.8" stroke="#fff" stroke-width=".9" fill="none"/></svg></div>
<div class="abs" style="left:24px;top:394px"><svg width="15" height="15" viewBox="0 0 15 15"><path d="M6.8 0.5 C10.6 0.5 13.2 2.4 13.2 5.4 C13.2 7.4 12.4 8.7 11.2 9.8 C10.9 11.4 9.6 12.9 7.4 13.8 C8.1 12.6 8.2 11.8 7.9 11 C7.5 11 7.2 11 6.8 11 C3 11 0.4 8.9 0.4 5.7 C0.4 2.6 3 0.5 6.8 0.5Z" fill="url(#ifg)" stroke="#a6a48f" stroke-width=".9"/><rect x="5.9" y="2" width="2.1" height="1.5" fill="#0a3aa8"/><path d="M4.8 4.6 H8 V8.6 H8.9 V9.7 H4.8 V8.6 H5.8 V5.7 H4.8Z" fill="#1670e8"/></svg></div>
<div class="t" style="left:49px;top:395px;letter-spacing:-0.165px;">School Profile, Gradebo…</div>
<div class="t" style="left:182px;top:395px;letter-spacing:-0.294px;">Gradebook Comments</div>
<div class="abs" style="left:585px;top:394px"><svg width="10" height="15" viewBox="0 0 10 15"><rect x="1" y="0.2" width="7.6" height="13.4" rx=".8" fill="#1a1a1a" stroke="#cfc39e" stroke-width=".4"/><rect x="1.4" y="0.6" width="1.2" height="12.6" fill="#555" opacity=".6"/><circle cx="5.2" cy="4.3" r="2.7" fill="#ff5a0a"/><circle cx="4.8" cy="7.6" r="1.5" fill="#a05a12"/><rect x="2.8" y="9.8" width="3.8" height="2.6" fill="#1f7a1f"/></svg></div>
<div class="abs" style="left:604px;top:391px"><svg width="24" height="20" viewBox="0 0 24 20"><path d="M9.1 4.2 Q9.1 3 14 3 Q18.9 3 18.9 4.2 V13.1 Q18.9 14.3 14 14.3 Q9.1 14.3 9.1 13.1Z" fill="url(#edg)" stroke="#6f71a6" stroke-width=".6"/><path d="M9.4 6.4 Q14 7.4 18.6 6.4 M9.4 8.9 Q14 9.9 18.6 8.9 M9.4 11.4 Q14 12.4 18.6 11.4" stroke="#eceefc" stroke-width=".7" fill="none" opacity=".85"/><path d="M5.3 10.2 Q4.6 7.3 7.3 7 L14.4 12.5 L11.7 15.5Z" fill="#36c436" stroke="#1f8a1f" stroke-width=".5"/><path d="M6.4 8.6 L7.6 7.6 L13.4 12.6 L12.2 13.8Z" fill="#86f486" opacity=".85"/><path d="M5.3 10.4 Q4.4 7.2 7.5 6.8" fill="none" stroke="#e0281a" stroke-width="1.2"/><path d="M11.7 15.5 L14.4 12.5 L15.9 16.7Z" fill="#f2a870"/><path d="M13.5 16 L15 14.4 L15.9 16.7Z" fill="#303030"/></svg></div>
<div class="abs" style="left:632px;top:391px"><svg width="20" height="20" viewBox="0 0 20 20"><rect x="4.2" y="4.2" width="9.8" height="11.5" rx="1.4" fill="url(#vwg)" stroke="#7072aa" stroke-width=".6"/><circle cx="10.3" cy="10.2" r="3.1" fill="url(#lng)" stroke="#5a5a6a" stroke-width="1"/><path d="M13 12.9 L15.9 15.8" stroke="#f06a1a" stroke-width="2.8" stroke-linecap="round"/><path d="M13.7 13.6 L14.4 14.3 M15.1 15 L15.6 15.5" stroke="#ffe06a" stroke-width="1.1"/></svg></div>
<div class="abs" style="left:0px;top:442px;width:655px;height:1px;background:#e3e3e3"></div>
<div class="abs" style="left:0px;top:423px"><svg width="11" height="13" viewBox="0 0 11 13"><path d="M0 1.6 Q0 0.4 4.9 0.4 Q9.8 0.4 9.8 1.6 V10.4 Q9.8 11.7 4.9 11.7 Q0 11.7 0 10.4Z" fill="url(#dbg)" stroke="#7a7cae" stroke-width=".6"/><path d="M0.3 3.6 Q4.9 4.6 9.5 3.6 M0.3 6.1 Q4.9 7.1 9.5 6.1 M0.3 8.6 Q4.9 9.6 9.5 8.6" stroke="#eeeffc" stroke-width=".8" fill="none" opacity=".9"/><path d="M0.3 1.8 Q4.9 2.8 9.5 1.8" stroke="#fff" stroke-width=".9" fill="none"/></svg></div>
<div class="abs" style="left:24px;top:422px"><svg width="15" height="15" viewBox="0 0 15 15"><path d="M6.8 0.5 C10.6 0.5 13.2 2.4 13.2 5.4 C13.2 7.4 12.4 8.7 11.2 9.8 C10.9 11.4 9.6 12.9 7.4 13.8 C8.1 12.6 8.2 11.8 7.9 11 C7.5 11 7.2 11 6.8 11 C3 11 0.4 8.9 0.4 5.7 C0.4 2.6 3 0.5 6.8 0.5Z" fill="url(#ifg)" stroke="#a6a48f" stroke-width=".9"/><rect x="5.9" y="2" width="2.1" height="1.5" fill="#0a3aa8"/><path d="M4.8 4.6 H8 V8.6 H8.9 V9.7 H4.8 V8.6 H5.8 V5.7 H4.8Z" fill="#1670e8"/></svg></div>
<div class="t" style="left:49px;top:423px;letter-spacing:-0.148px;">School Profile, Homew…</div>
<div class="t" style="left:182px;top:423px;letter-spacing:-0.047px;">Homework Details</div>
<div class="abs" style="left:585px;top:422px"><svg width="10" height="15" viewBox="0 0 10 15"><rect x="1" y="0.2" width="7.6" height="13.4" rx=".8" fill="#1a1a1a" stroke="#cfc39e" stroke-width=".4"/><rect x="1.4" y="0.6" width="1.2" height="12.6" fill="#555" opacity=".6"/><circle cx="5.2" cy="4.3" r="2.7" fill="#ff5a0a"/><circle cx="4.8" cy="7.6" r="1.5" fill="#a05a12"/><rect x="2.8" y="9.8" width="3.8" height="2.6" fill="#1f7a1f"/></svg></div>
<div class="abs" style="left:604px;top:419px"><svg width="24" height="20" viewBox="0 0 24 20"><path d="M9.1 4.2 Q9.1 3 14 3 Q18.9 3 18.9 4.2 V13.1 Q18.9 14.3 14 14.3 Q9.1 14.3 9.1 13.1Z" fill="url(#edg)" stroke="#6f71a6" stroke-width=".6"/><path d="M9.4 6.4 Q14 7.4 18.6 6.4 M9.4 8.9 Q14 9.9 18.6 8.9 M9.4 11.4 Q14 12.4 18.6 11.4" stroke="#eceefc" stroke-width=".7" fill="none" opacity=".85"/><path d="M5.3 10.2 Q4.6 7.3 7.3 7 L14.4 12.5 L11.7 15.5Z" fill="#36c436" stroke="#1f8a1f" stroke-width=".5"/><path d="M6.4 8.6 L7.6 7.6 L13.4 12.6 L12.2 13.8Z" fill="#86f486" opacity=".85"/><path d="M5.3 10.4 Q4.4 7.2 7.5 6.8" fill="none" stroke="#e0281a" stroke-width="1.2"/><path d="M11.7 15.5 L14.4 12.5 L15.9 16.7Z" fill="#f2a870"/><path d="M13.5 16 L15 14.4 L15.9 16.7Z" fill="#303030"/></svg></div>
<div class="abs" style="left:632px;top:419px"><svg width="20" height="20" viewBox="0 0 20 20"><rect x="4.2" y="4.2" width="9.8" height="11.5" rx="1.4" fill="url(#vwg)" stroke="#7072aa" stroke-width=".6"/><circle cx="10.3" cy="10.2" r="3.1" fill="url(#lng)" stroke="#5a5a6a" stroke-width="1"/><path d="M13 12.9 L15.9 15.8" stroke="#f06a1a" stroke-width="2.8" stroke-linecap="round"/><path d="M13.7 13.6 L14.4 14.3 M15.1 15 L15.6 15.5" stroke="#ffe06a" stroke-width="1.1"/></svg></div>
<div class="abs" style="left:0px;top:469px;width:655px;height:1px;background:#e3e3e3"></div>
<div class="abs" style="left:0px;top:451px"><svg width="11" height="13" viewBox="0 0 11 13"><path d="M0 1.6 Q0 0.4 4.9 0.4 Q9.8 0.4 9.8 1.6 V10.4 Q9.8 11.7 4.9 11.7 Q0 11.7 0 10.4Z" fill="url(#dbg)" stroke="#7a7cae" stroke-width=".6"/><path d="M0.3 3.6 Q4.9 4.6 9.5 3.6 M0.3 6.1 Q4.9 7.1 9.5 6.1 M0.3 8.6 Q4.9 9.6 9.5 8.6" stroke="#eeeffc" stroke-width=".8" fill="none" opacity=".9"/><path d="M0.3 1.8 Q4.9 2.8 9.5 1.8" stroke="#fff" stroke-width=".9" fill="none"/></svg></div>
<div class="abs" style="left:24px;top:450px"><svg width="15" height="15" viewBox="0 0 15 15"><path d="M6.8 0.5 C10.6 0.5 13.2 2.4 13.2 5.4 C13.2 7.4 12.4 8.7 11.2 9.8 C10.9 11.4 9.6 12.9 7.4 13.8 C8.1 12.6 8.2 11.8 7.9 11 C7.5 11 7.2 11 6.8 11 C3 11 0.4 8.9 0.4 5.7 C0.4 2.6 3 0.5 6.8 0.5Z" fill="url(#ifg)" stroke="#a6a48f" stroke-width=".9"/><rect x="5.9" y="2" width="2.1" height="1.5" fill="#0a3aa8"/><path d="M4.8 4.6 H8 V8.6 H8.9 V9.7 H4.8 V8.6 H5.8 V5.7 H4.8Z" fill="#1670e8"/></svg></div>
<div class="t" style="left:49px;top:451px;letter-spacing:-0.179px;">School Profile, Medical …</div>
<div class="t" style="left:182px;top:451px;letter-spacing:-0.173px;">Vaccinations</div>
<div class="abs" style="left:585px;top:450px"><svg width="10" height="15" viewBox="0 0 10 15"><rect x="1" y="0.2" width="7.6" height="13.4" rx=".8" fill="#1a1a1a" stroke="#cfc39e" stroke-width=".4"/><rect x="1.4" y="0.6" width="1.2" height="12.6" fill="#555" opacity=".6"/><circle cx="5.2" cy="4.3" r="2.7" fill="#ff5a0a"/><circle cx="4.8" cy="7.6" r="1.5" fill="#a05a12"/><rect x="2.8" y="9.8" width="3.8" height="2.6" fill="#1f7a1f"/></svg></div>
<div class="abs" style="left:604px;top:447px"><svg width="24" height="20" viewBox="0 0 24 20"><path d="M9.1 4.2 Q9.1 3 14 3 Q18.9 3 18.9 4.2 V13.1 Q18.9 14.3 14 14.3 Q9.1 14.3 9.1 13.1Z" fill="url(#edg)" stroke="#6f71a6" stroke-width=".6"/><path d="M9.4 6.4 Q14 7.4 18.6 6.4 M9.4 8.9 Q14 9.9 18.6 8.9 M9.4 11.4 Q14 12.4 18.6 11.4" stroke="#eceefc" stroke-width=".7" fill="none" opacity=".85"/><path d="M5.3 10.2 Q4.6 7.3 7.3 7 L14.4 12.5 L11.7 15.5Z" fill="#36c436" stroke="#1f8a1f" stroke-width=".5"/><path d="M6.4 8.6 L7.6 7.6 L13.4 12.6 L12.2 13.8Z" fill="#86f486" opacity=".85"/><path d="M5.3 10.4 Q4.4 7.2 7.5 6.8" fill="none" stroke="#e0281a" stroke-width="1.2"/><path d="M11.7 15.5 L14.4 12.5 L15.9 16.7Z" fill="#f2a870"/><path d="M13.5 16 L15 14.4 L15.9 16.7Z" fill="#303030"/></svg></div>
<div class="abs" style="left:632px;top:447px"><svg width="20" height="20" viewBox="0 0 20 20"><rect x="4.2" y="4.2" width="9.8" height="11.5" rx="1.4" fill="url(#vwg)" stroke="#7072aa" stroke-width=".6"/><circle cx="10.3" cy="10.2" r="3.1" fill="url(#lng)" stroke="#5a5a6a" stroke-width="1"/><path d="M13 12.9 L15.9 15.8" stroke="#f06a1a" stroke-width="2.8" stroke-linecap="round"/><path d="M13.7 13.6 L14.4 14.3 M15.1 15 L15.6 15.5" stroke="#ffe06a" stroke-width="1.1"/></svg></div>
<div class="abs" style="left:0px;top:497px;width:655px;height:1px;background:#e3e3e3"></div>
<div class="abs" style="left:0px;top:478px"><svg width="11" height="13" viewBox="0 0 11 13"><path d="M0 1.6 Q0 0.4 4.9 0.4 Q9.8 0.4 9.8 1.6 V10.4 Q9.8 11.7 4.9 11.7 Q0 11.7 0 10.4Z" fill="url(#dbg)" stroke="#7a7cae" stroke-width=".6"/><path d="M0.3 3.6 Q4.9 4.6 9.5 3.6 M0.3 6.1 Q4.9 7.1 9.5 6.1 M0.3 8.6 Q4.9 9.6 9.5 8.6" stroke="#eeeffc" stroke-width=".8" fill="none" opacity=".9"/><path d="M0.3 1.8 Q4.9 2.8 9.5 1.8" stroke="#fff" stroke-width=".9" fill="none"/></svg></div>
<div class="abs" style="left:24px;top:477px"><svg width="15" height="15" viewBox="0 0 15 15"><path d="M6.8 0.5 C10.6 0.5 13.2 2.4 13.2 5.4 C13.2 7.4 12.4 8.7 11.2 9.8 C10.9 11.4 9.6 12.9 7.4 13.8 C8.1 12.6 8.2 11.8 7.9 11 C7.5 11 7.2 11 6.8 11 C3 11 0.4 8.9 0.4 5.7 C0.4 2.6 3 0.5 6.8 0.5Z" fill="url(#ifg)" stroke="#a6a48f" stroke-width=".9"/><rect x="5.9" y="2" width="2.1" height="1.5" fill="#0a3aa8"/><path d="M4.8 4.6 H8 V8.6 H8.9 V9.7 H4.8 V8.6 H5.8 V5.7 H4.8Z" fill="#1670e8"/></svg></div>
<div class="t" style="left:49px;top:478px;letter-spacing:-0.179px;">School Profile, Medical …</div>
<div class="t" style="left:182px;top:478px;letter-spacing:-0.15px;">Doctors</div>
<div class="abs" style="left:585px;top:477px"><svg width="10" height="15" viewBox="0 0 10 15"><rect x="1" y="0.2" width="7.6" height="13.4" rx=".8" fill="#1a1a1a" stroke="#cfc39e" stroke-width=".4"/><rect x="1.4" y="0.6" width="1.2" height="12.6" fill="#555" opacity=".6"/><circle cx="5.2" cy="4.3" r="2.7" fill="#ff5a0a"/><circle cx="4.8" cy="7.6" r="1.5" fill="#a05a12"/><rect x="2.8" y="9.8" width="3.8" height="2.6" fill="#1f7a1f"/></svg></div>
<div class="abs" style="left:604px;top:474px"><svg width="24" height="20" viewBox="0 0 24 20"><path d="M9.1 4.2 Q9.1 3 14 3 Q18.9 3 18.9 4.2 V13.1 Q18.9 14.3 14 14.3 Q9.1 14.3 9.1 13.1Z" fill="url(#edg)" stroke="#6f71a6" stroke-width=".6"/><path d="M9.4 6.4 Q14 7.4 18.6 6.4 M9.4 8.9 Q14 9.9 18.6 8.9 M9.4 11.4 Q14 12.4 18.6 11.4" stroke="#eceefc" stroke-width=".7" fill="none" opacity=".85"/><path d="M5.3 10.2 Q4.6 7.3 7.3 7 L14.4 12.5 L11.7 15.5Z" fill="#36c436" stroke="#1f8a1f" stroke-width=".5"/><path d="M6.4 8.6 L7.6 7.6 L13.4 12.6 L12.2 13.8Z" fill="#86f486" opacity=".85"/><path d="M5.3 10.4 Q4.4 7.2 7.5 6.8" fill="none" stroke="#e0281a" stroke-width="1.2"/><path d="M11.7 15.5 L14.4 12.5 L15.9 16.7Z" fill="#f2a870"/><path d="M13.5 16 L15 14.4 L15.9 16.7Z" fill="#303030"/></svg></div>
<div class="abs" style="left:632px;top:474px"><svg width="20" height="20" viewBox="0 0 20 20"><rect x="4.2" y="4.2" width="9.8" height="11.5" rx="1.4" fill="url(#vwg)" stroke="#7072aa" stroke-width=".6"/><circle cx="10.3" cy="10.2" r="3.1" fill="url(#lng)" stroke="#5a5a6a" stroke-width="1"/><path d="M13 12.9 L15.9 15.8" stroke="#f06a1a" stroke-width="2.8" stroke-linecap="round"/><path d="M13.7 13.6 L14.4 14.3 M15.1 15 L15.6 15.5" stroke="#ffe06a" stroke-width="1.1"/></svg></div>
<div class="abs" style="left:0px;top:525px;width:655px;height:1px;background:#e3e3e3"></div>
<div class="abs" style="left:0px;top:506px"><svg width="11" height="13" viewBox="0 0 11 13"><path d="M0 1.6 Q0 0.4 4.9 0.4 Q9.8 0.4 9.8 1.6 V10.4 Q9.8 11.7 4.9 11.7 Q0 11.7 0 10.4Z" fill="url(#dbg)" stroke="#7a7cae" stroke-width=".6"/><path d="M0.3 3.6 Q4.9 4.6 9.5 3.6 M0.3 6.1 Q4.9 7.1 9.5 6.1 M0.3 8.6 Q4.9 9.6 9.5 8.6" stroke="#eeeffc" stroke-width=".8" fill="none" opacity=".9"/><path d="M0.3 1.8 Q4.9 2.8 9.5 1.8" stroke="#fff" stroke-width=".9" fill="none"/></svg></div>
<div class="abs" style="left:24px;top:505px"><svg width="15" height="15" viewBox="0 0 15 15"><path d="M6.8 0.5 C10.6 0.5 13.2 2.4 13.2 5.4 C13.2 7.4 12.4 8.7 11.2 9.8 C10.9 11.4 9.6 12.9 7.4 13.8 C8.1 12.6 8.2 11.8 7.9 11 C7.5 11 7.2 11 6.8 11 C3 11 0.4 8.9 0.4 5.7 C0.4 2.6 3 0.5 6.8 0.5Z" fill="url(#ifg)" stroke="#a6a48f" stroke-width=".9"/><rect x="5.9" y="2" width="2.1" height="1.5" fill="#0a3aa8"/><path d="M4.8 4.6 H8 V8.6 H8.9 V9.7 H4.8 V8.6 H5.8 V5.7 H4.8Z" fill="#1670e8"/></svg></div>
<div class="t" style="left:49px;top:506px;letter-spacing:-0.179px;">School Profile, Medical …</div>
<div class="t" style="left:182px;top:506px;letter-spacing:-0.163px;">Documents</div>
<div class="abs" style="left:585px;top:505px"><svg width="10" height="15" viewBox="0 0 10 15"><rect x="1" y="0.2" width="7.6" height="13.4" rx=".8" fill="#1a1a1a" stroke="#cfc39e" stroke-width=".4"/><rect x="1.4" y="0.6" width="1.2" height="12.6" fill="#555" opacity=".6"/><circle cx="5.2" cy="4.3" r="2.7" fill="#ff5a0a"/><circle cx="4.8" cy="7.6" r="1.5" fill="#a05a12"/><rect x="2.8" y="9.8" width="3.8" height="2.6" fill="#1f7a1f"/></svg></div>
<div class="abs" style="left:604px;top:502px"><svg width="24" height="20" viewBox="0 0 24 20"><path d="M9.1 4.2 Q9.1 3 14 3 Q18.9 3 18.9 4.2 V13.1 Q18.9 14.3 14 14.3 Q9.1 14.3 9.1 13.1Z" fill="url(#edg)" stroke="#6f71a6" stroke-width=".6"/><path d="M9.4 6.4 Q14 7.4 18.6 6.4 M9.4 8.9 Q14 9.9 18.6 8.9 M9.4 11.4 Q14 12.4 18.6 11.4" stroke="#eceefc" stroke-width=".7" fill="none" opacity=".85"/><path d="M5.3 10.2 Q4.6 7.3 7.3 7 L14.4 12.5 L11.7 15.5Z" fill="#36c436" stroke="#1f8a1f" stroke-width=".5"/><path d="M6.4 8.6 L7.6 7.6 L13.4 12.6 L12.2 13.8Z" fill="#86f486" opacity=".85"/><path d="M5.3 10.4 Q4.4 7.2 7.5 6.8" fill="none" stroke="#e0281a" stroke-width="1.2"/><path d="M11.7 15.5 L14.4 12.5 L15.9 16.7Z" fill="#f2a870"/><path d="M13.5 16 L15 14.4 L15.9 16.7Z" fill="#303030"/></svg></div>
<div class="abs" style="left:632px;top:502px"><svg width="20" height="20" viewBox="0 0 20 20"><rect x="4.2" y="4.2" width="9.8" height="11.5" rx="1.4" fill="url(#vwg)" stroke="#7072aa" stroke-width=".6"/><circle cx="10.3" cy="10.2" r="3.1" fill="url(#lng)" stroke="#5a5a6a" stroke-width="1"/><path d="M13 12.9 L15.9 15.8" stroke="#f06a1a" stroke-width="2.8" stroke-linecap="round"/><path d="M13.7 13.6 L14.4 14.3 M15.1 15 L15.6 15.5" stroke="#ffe06a" stroke-width="1.1"/></svg></div>
<div class="abs" style="left:0px;top:553px;width:655px;height:1px;background:#e3e3e3"></div>
<div class="abs" style="left:0px;top:534px"><svg width="11" height="13" viewBox="0 0 11 13"><path d="M0 1.6 Q0 0.4 4.9 0.4 Q9.8 0.4 9.8 1.6 V10.4 Q9.8 11.7 4.9 11.7 Q0 11.7 0 10.4Z" fill="url(#dbg)" stroke="#7a7cae" stroke-width=".6"/><path d="M0.3 3.6 Q4.9 4.6 9.5 3.6 M0.3 6.1 Q4.9 7.1 9.5 6.1 M0.3 8.6 Q4.9 9.6 9.5 8.6" stroke="#eeeffc" stroke-width=".8" fill="none" opacity=".9"/><path d="M0.3 1.8 Q4.9 2.8 9.5 1.8" stroke="#fff" stroke-width=".9" fill="none"/></svg></div>
<div class="abs" style="left:24px;top:533px"><svg width="15" height="15" viewBox="0 0 15 15"><path d="M6.8 0.5 C10.6 0.5 13.2 2.4 13.2 5.4 C13.2 7.4 12.4 8.7 11.2 9.8 C10.9 11.4 9.6 12.9 7.4 13.8 C8.1 12.6 8.2 11.8 7.9 11 C7.5 11 7.2 11 6.8 11 C3 11 0.4 8.9 0.4 5.7 C0.4 2.6 3 0.5 6.8 0.5Z" fill="url(#ifg)" stroke="#a6a48f" stroke-width=".9"/><rect x="5.9" y="2" width="2.1" height="1.5" fill="#0a3aa8"/><path d="M4.8 4.6 H8 V8.6 H8.9 V9.7 H4.8 V8.6 H5.8 V5.7 H4.8Z" fill="#1670e8"/></svg></div>
<div class="t" style="left:49px;top:534px;letter-spacing:-0.179px;">School Profile, Medical …</div>
<div class="t" style="left:182px;top:534px;letter-spacing:-0.187px;">Parental Consent</div>
<div class="abs" style="left:585px;top:533px"><svg width="10" height="15" viewBox="0 0 10 15"><rect x="1" y="0.2" width="7.6" height="13.4" rx=".8" fill="#1a1a1a" stroke="#cfc39e" stroke-width=".4"/><rect x="1.4" y="0.6" width="1.2" height="12.6" fill="#555" opacity=".6"/><circle cx="4.8" cy="3.4" r="1.3" fill="#a01414"/><circle cx="4.8" cy="6.9" r="1.3" fill="#8a6a18"/><circle cx="4.8" cy="10.6" r="1.7" fill="#44e044"/></svg></div>
<div class="abs" style="left:604px;top:530px"><svg width="24" height="20" viewBox="0 0 24 20"><path d="M9.1 4.2 Q9.1 3 14 3 Q18.9 3 18.9 4.2 V13.1 Q18.9 14.3 14 14.3 Q9.1 14.3 9.1 13.1Z" fill="url(#edg)" stroke="#6f71a6" stroke-width=".6"/><path d="M9.4 6.4 Q14 7.4 18.6 6.4 M9.4 8.9 Q14 9.9 18.6 8.9 M9.4 11.4 Q14 12.4 18.6 11.4" stroke="#eceefc" stroke-width=".7" fill="none" opacity=".85"/><path d="M5.3 10.2 Q4.6 7.3 7.3 7 L14.4 12.5 L11.7 15.5Z" fill="#36c436" stroke="#1f8a1f" stroke-width=".5"/><path d="M6.4 8.6 L7.6 7.6 L13.4 12.6 L12.2 13.8Z" fill="#86f486" opacity=".85"/><path d="M5.3 10.4 Q4.4 7.2 7.5 6.8" fill="none" stroke="#e0281a" stroke-width="1.2"/><path d="M11.7 15.5 L14.4 12.5 L15.9 16.7Z" fill="#f2a870"/><path d="M13.5 16 L15 14.4 L15.9 16.7Z" fill="#303030"/></svg></div>
<div class="abs" style="left:632px;top:530px"><svg width="20" height="20" viewBox="0 0 20 20"><rect x="4.2" y="4.2" width="9.8" height="11.5" rx="1.4" fill="url(#vwg)" stroke="#7072aa" stroke-width=".6"/><circle cx="10.3" cy="10.2" r="3.1" fill="url(#lng)" stroke="#5a5a6a" stroke-width="1"/><path d="M13 12.9 L15.9 15.8" stroke="#f06a1a" stroke-width="2.8" stroke-linecap="round"/><path d="M13.7 13.6 L14.4 14.3 M15.1 15 L15.6 15.5" stroke="#ffe06a" stroke-width="1.1"/></svg></div>
<div class="abs" style="left:0px;top:581px;width:655px;height:1px;background:#e3e3e3"></div>
<div class="abs" style="left:0px;top:562px"><svg width="11" height="13" viewBox="0 0 11 13"><path d="M0 1.6 Q0 0.4 4.9 0.4 Q9.8 0.4 9.8 1.6 V10.4 Q9.8 11.7 4.9 11.7 Q0 11.7 0 10.4Z" fill="url(#dbg)" stroke="#7a7cae" stroke-width=".6"/><path d="M0.3 3.6 Q4.9 4.6 9.5 3.6 M0.3 6.1 Q4.9 7.1 9.5 6.1 M0.3 8.6 Q4.9 9.6 9.5 8.6" stroke="#eeeffc" stroke-width=".8" fill="none" opacity=".9"/><path d="M0.3 1.8 Q4.9 2.8 9.5 1.8" stroke="#fff" stroke-width=".9" fill="none"/></svg></div>
<div class="abs" style="left:24px;top:561px"><svg width="15" height="15" viewBox="0 0 15 15"><path d="M6.8 0.5 C10.6 0.5 13.2 2.4 13.2 5.4 C13.2 7.4 12.4 8.7 11.2 9.8 C10.9 11.4 9.6 12.9 7.4 13.8 C8.1 12.6 8.2 11.8 7.9 11 C7.5 11 7.2 11 6.8 11 C3 11 0.4 8.9 0.4 5.7 C0.4 2.6 3 0.5 6.8 0.5Z" fill="url(#ifg)" stroke="#a6a48f" stroke-width=".9"/><rect x="5.9" y="2" width="2.1" height="1.5" fill="#0a3aa8"/><path d="M4.8 4.6 H8 V8.6 H8.9 V9.7 H4.8 V8.6 H5.8 V5.7 H4.8Z" fill="#1670e8"/></svg></div>
<div class="t" style="left:49px;top:562px;letter-spacing:-0.179px;">School Profile, Medical …</div>
<div class="t" style="left:182px;top:562px;letter-spacing:-0.125px;">Diary</div>
<div class="abs" style="left:585px;top:561px"><svg width="10" height="15" viewBox="0 0 10 15"><rect x="1" y="0.2" width="7.6" height="13.4" rx=".8" fill="#1a1a1a" stroke="#cfc39e" stroke-width=".4"/><rect x="1.4" y="0.6" width="1.2" height="12.6" fill="#555" opacity=".6"/><circle cx="5.2" cy="4.3" r="2.7" fill="#ff5a0a"/><circle cx="4.8" cy="7.6" r="1.5" fill="#a05a12"/><rect x="2.8" y="9.8" width="3.8" height="2.6" fill="#1f7a1f"/></svg></div>
<div class="abs" style="left:604px;top:558px"><svg width="24" height="20" viewBox="0 0 24 20"><path d="M9.1 4.2 Q9.1 3 14 3 Q18.9 3 18.9 4.2 V13.1 Q18.9 14.3 14 14.3 Q9.1 14.3 9.1 13.1Z" fill="url(#edg)" stroke="#6f71a6" stroke-width=".6"/><path d="M9.4 6.4 Q14 7.4 18.6 6.4 M9.4 8.9 Q14 9.9 18.6 8.9 M9.4 11.4 Q14 12.4 18.6 11.4" stroke="#eceefc" stroke-width=".7" fill="none" opacity=".85"/><path d="M5.3 10.2 Q4.6 7.3 7.3 7 L14.4 12.5 L11.7 15.5Z" fill="#36c436" stroke="#1f8a1f" stroke-width=".5"/><path d="M6.4 8.6 L7.6 7.6 L13.4 12.6 L12.2 13.8Z" fill="#86f486" opacity=".85"/><path d="M5.3 10.4 Q4.4 7.2 7.5 6.8" fill="none" stroke="#e0281a" stroke-width="1.2"/><path d="M11.7 15.5 L14.4 12.5 L15.9 16.7Z" fill="#f2a870"/><path d="M13.5 16 L15 14.4 L15.9 16.7Z" fill="#303030"/></svg></div>
<div class="abs" style="left:632px;top:558px"><svg width="20" height="20" viewBox="0 0 20 20"><rect x="4.2" y="4.2" width="9.8" height="11.5" rx="1.4" fill="url(#vwg)" stroke="#7072aa" stroke-width=".6"/><circle cx="10.3" cy="10.2" r="3.1" fill="url(#lng)" stroke="#5a5a6a" stroke-width="1"/><path d="M13 12.9 L15.9 15.8" stroke="#f06a1a" stroke-width="2.8" stroke-linecap="round"/><path d="M13.7 13.6 L14.4 14.3 M15.1 15 L15.6 15.5" stroke="#ffe06a" stroke-width="1.1"/></svg></div>
<div class="abs" style="left:0px;top:590px"><svg width="11" height="13" viewBox="0 0 11 13"><path d="M0 1.6 Q0 0.4 4.9 0.4 Q9.8 0.4 9.8 1.6 V10.4 Q9.8 11.7 4.9 11.7 Q0 11.7 0 10.4Z" fill="url(#dbg)" stroke="#7a7cae" stroke-width=".6"/><path d="M0.3 3.6 Q4.9 4.6 9.5 3.6 M0.3 6.1 Q4.9 7.1 9.5 6.1 M0.3 8.6 Q4.9 9.6 9.5 8.6" stroke="#eeeffc" stroke-width=".8" fill="none" opacity=".9"/><path d="M0.3 1.8 Q4.9 2.8 9.5 1.8" stroke="#fff" stroke-width=".9" fill="none"/></svg></div>
<div class="abs" style="left:24px;top:589px"><svg width="15" height="15" viewBox="0 0 15 15"><path d="M6.8 0.5 C10.6 0.5 13.2 2.4 13.2 5.4 C13.2 7.4 12.4 8.7 11.2 9.8 C10.9 11.4 9.6 12.9 7.4 13.8 C8.1 12.6 8.2 11.8 7.9 11 C7.5 11 7.2 11 6.8 11 C3 11 0.4 8.9 0.4 5.7 C0.4 2.6 3 0.5 6.8 0.5Z" fill="url(#ifg)" stroke="#a6a48f" stroke-width=".9"/><rect x="5.9" y="2" width="2.1" height="1.5" fill="#0a3aa8"/><path d="M4.8 4.6 H8 V8.6 H8.9 V9.7 H4.8 V8.6 H5.8 V5.7 H4.8Z" fill="#1670e8"/></svg></div>
<div class="t" style="left:49px;top:590px;letter-spacing:-0.179px;">School Profile, Medical …</div>
<div class="t" style="left:182px;top:590px;letter-spacing:0.083px;">History</div>
<div class="abs" style="left:585px;top:589px"><svg width="10" height="15" viewBox="0 0 10 15"><rect x="1" y="0.2" width="7.6" height="13.4" rx=".8" fill="#1a1a1a" stroke="#cfc39e" stroke-width=".4"/><rect x="1.4" y="0.6" width="1.2" height="12.6" fill="#555" opacity=".6"/><circle cx="5.2" cy="4.3" r="2.7" fill="#ff5a0a"/><circle cx="4.8" cy="7.6" r="1.5" fill="#a05a12"/><rect x="2.8" y="9.8" width="3.8" height="2.6" fill="#1f7a1f"/></svg></div>
<div class="abs" style="left:604px;top:586px"><svg width="24" height="20" viewBox="0 0 24 20"><path d="M9.1 4.2 Q9.1 3 14 3 Q18.9 3 18.9 4.2 V13.1 Q18.9 14.3 14 14.3 Q9.1 14.3 9.1 13.1Z" fill="url(#edg)" stroke="#6f71a6" stroke-width=".6"/><path d="M9.4 6.4 Q14 7.4 18.6 6.4 M9.4 8.9 Q14 9.9 18.6 8.9 M9.4 11.4 Q14 12.4 18.6 11.4" stroke="#eceefc" stroke-width=".7" fill="none" opacity=".85"/><path d="M5.3 10.2 Q4.6 7.3 7.3 7 L14.4 12.5 L11.7 15.5Z" fill="#36c436" stroke="#1f8a1f" stroke-width=".5"/><path d="M6.4 8.6 L7.6 7.6 L13.4 12.6 L12.2 13.8Z" fill="#86f486" opacity=".85"/><path d="M5.3 10.4 Q4.4 7.2 7.5 6.8" fill="none" stroke="#e0281a" stroke-width="1.2"/><path d="M11.7 15.5 L14.4 12.5 L15.9 16.7Z" fill="#f2a870"/><path d="M13.5 16 L15 14.4 L15.9 16.7Z" fill="#303030"/></svg></div>
<div class="abs" style="left:632px;top:586px"><svg width="20" height="20" viewBox="0 0 20 20"><rect x="4.2" y="4.2" width="9.8" height="11.5" rx="1.4" fill="url(#vwg)" stroke="#7072aa" stroke-width=".6"/><circle cx="10.3" cy="10.2" r="3.1" fill="url(#lng)" stroke="#5a5a6a" stroke-width="1"/><path d="M13 12.9 L15.9 15.8" stroke="#f06a1a" stroke-width="2.8" stroke-linecap="round"/><path d="M13.7 13.6 L14.4 14.3 M15.1 15 L15.6 15.5" stroke="#ffe06a" stroke-width="1.1"/></svg></div>
</div>
<div class="abs" style="left:0px;top:763px;width:670px;height:7px;background:linear-gradient(180deg,rgba(0,0,0,0) 0%,rgba(0,0,0,.06) 60%,rgba(0,0,0,.2) 100%)"></div>
<div class="abs" style="left:655px;top:160px;width:15px;height:610px;background:#fbfbfb"></div>
<svg class="abs" style="left:657px;top:164px" width="11" height="8" viewBox="0 0 11 8"><path d="M1 7.5 L5.5 1 L10 7.5Z" fill="#8a8a8a"/></svg>
<div class="abs" style="left:658px;top:564px;width:9px;height:172px;background:#8c8c8c;border-radius:4.5px"></div>
<svg class="abs" style="left:657px;top:758px" width="11" height="9" viewBox="0 0 11 9"><path d="M1 1 L10 1 L5.5 8Z" fill="#8a8a8a"/></svg>
<div class="abs" style="left:0px;top:770px;width:870px;height:54px;background:#f0f0f0"></div>
<div class="abs" style="left:671px;top:763px;width:199px;height:7px;background:linear-gradient(180deg,rgba(0,0,0,0) 0%,rgba(0,0,0,.04) 60%,rgba(0,0,0,.14) 100%)"></div>
<div class="abs" style="left:8px;top:784px;width:144px;height:32px;background:#0a5ba6;border-radius:3px"></div>
<svg class="abs" style="left:22px;top:790px" width="20" height="20" viewBox="0 0 20 20"><path d="M4 5.6 L6.6 4.6 Q8.2 2 10 2 Q11.8 2 13.4 4.6 L16 5.6 Q14.9 6.1 14.4 7.6 Q13.9 8.9 12 8.9 H8 Q6.1 8.9 5.6 7.6 Q5.1 6.1 4 5.6Z" fill="none" stroke="#fff" stroke-width="1.1"/><g stroke="#9bb9de" stroke-width="1.1" stroke-dasharray="1.6 1.6"><path d="M4 9 V13.8 M10 9.6 V13.8 M16 9 V13.8"/></g><g fill="none" stroke="#fff" stroke-width="1.3"><rect x="2.2" y="14.6" width="3.4" height="3.2"/><rect x="8.2" y="14.6" width="3.4" height="3.2"/><rect x="14.2" y="14.6" width="3.4" height="3.2"/></g></svg>
<div class="t" style="left:48px;top:793px;font-size:12px;line-height:15px;color:#fff;letter-spacing:-0.4px">Cloud Portal Ma...</div>
<div class="abs" style="left:506px;top:770px;width:1px;height:54px;background:#cfcfcf"></div>
<div class="abs" style="left:532px;top:784px;width:63px;height:31px;border:1px solid #e6e6e6;background:#f8f8f8;border-radius:2px"></div>
<div class="abs" style="left:563px;top:785px;width:1px;height:29px;background:#e0e0e0"></div>
<svg class="abs" style="left:540px;top:789px" width="50" height="22" viewBox="0 0 50 22"><path d="M12 3 L4 11 L12 19 M35 3 L43 11 L35 19" fill="none" stroke="#c4c4c4" stroke-width="1"/></svg>
<div class="abs" style="left:688px;top:800px;width:36px;height:4px;background:#3a9ad9"></div>
<div class="abs" style="left:724px;top:800px;width:35px;height:4px;background:#8e3a97"></div>
<div class="abs" style="left:759px;top:800px;width:36px;height:4px;background:#e89a1a"></div>
<div class="abs" style="left:795px;top:800px;width:35px;height:4px;background:#4aa64a"></div>
<svg class="abs" style="left:844px;top:747px" width="16" height="22" viewBox="0 0 16 22"><path d="M1.5 1.2 V17.5 L5.2 13.8 L8 19.8 L10.5 18.7 L7.8 12.8 L12.8 12.8Z" fill="#fff" stroke="#111" stroke-width="1" stroke-linejoin="round"/></svg>
</body></html>
